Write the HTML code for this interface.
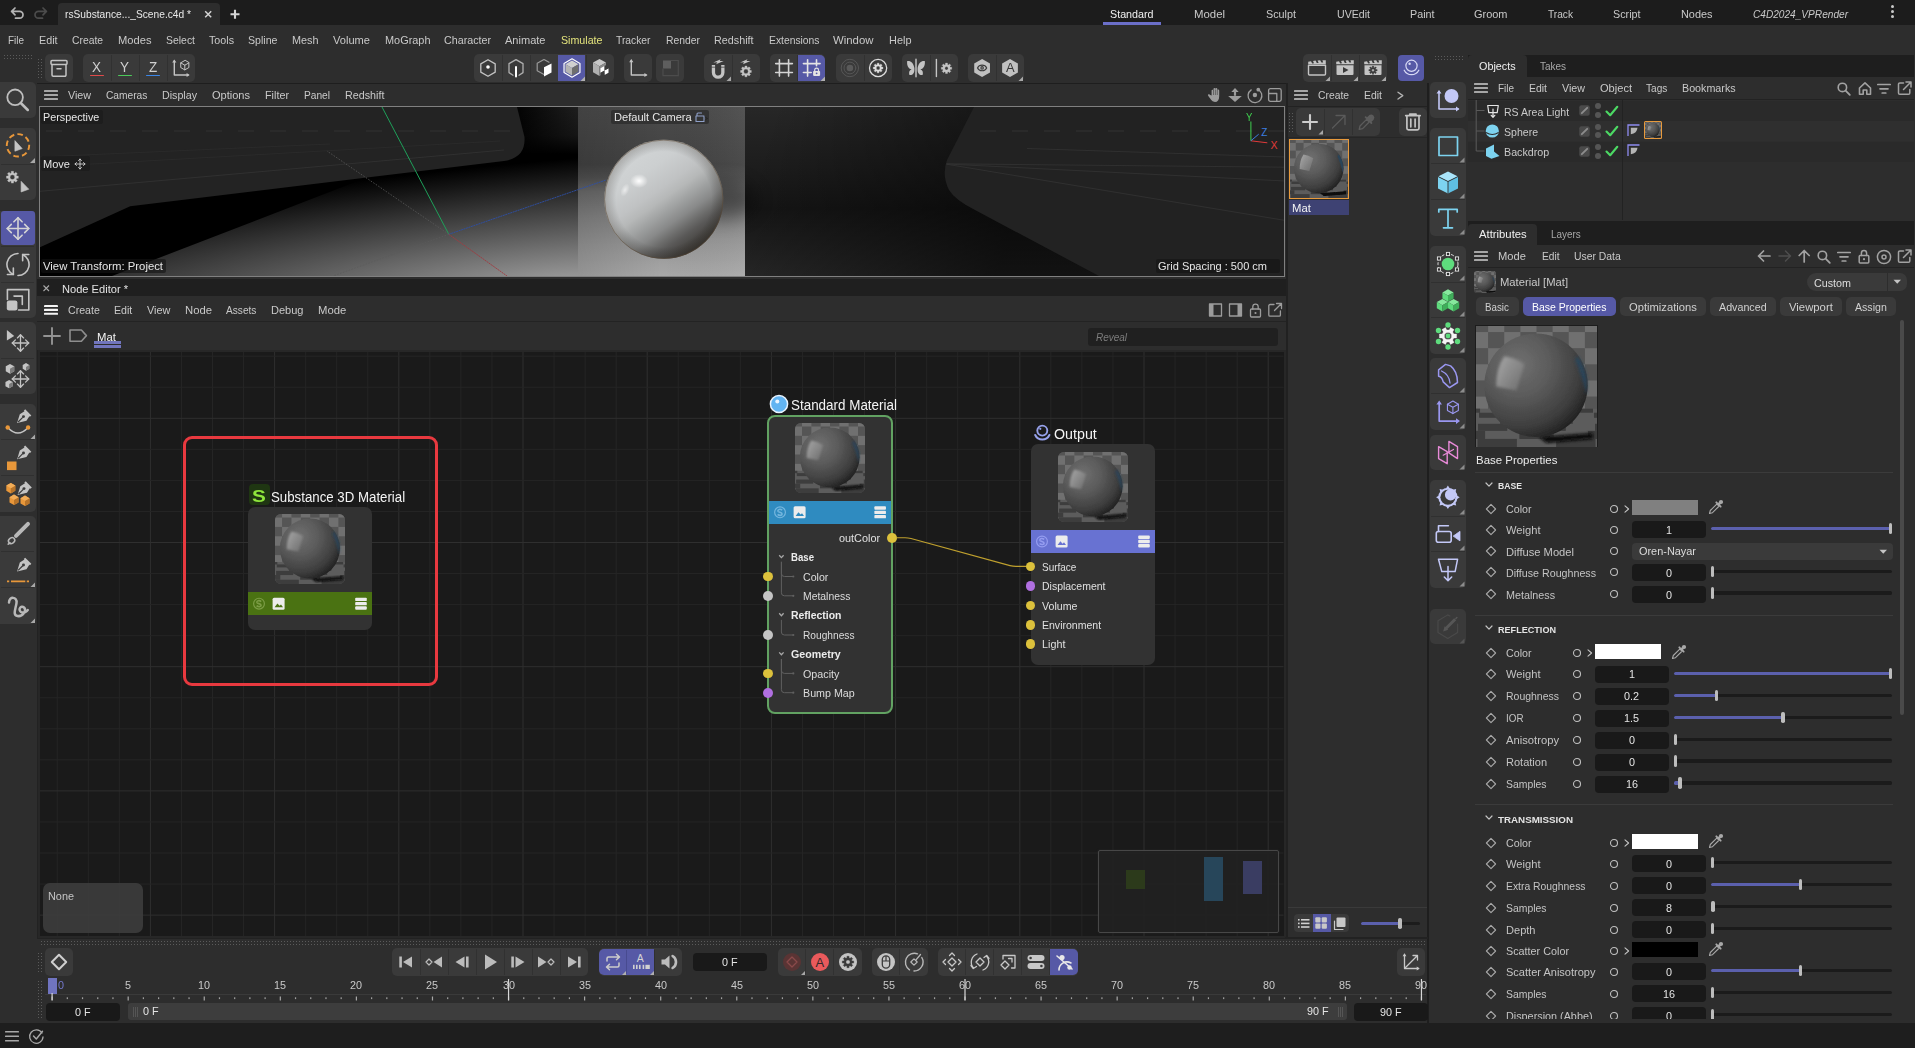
<!DOCTYPE html>
<html><head><meta charset="utf-8"><title>Cinema 4D - Node Editor</title>
<style>
html,body{margin:0;padding:0;background:#2d2d2d;}
body{width:1915px;height:1048px;position:relative;overflow:hidden;font-family:"Liberation Sans",sans-serif;}
div,svg,span.t{position:absolute;}
span.t{white-space:nowrap;transform-origin:0 0;display:block;}
svg{overflow:visible;}
</style></head><body>
<svg width="0" height="0" style="left:0;top:0"><defs>
<radialGradient id="tsph" cx="0.33" cy="0.3" r="0.8"><stop offset="0" stop-color="#707070"/><stop offset="0.4" stop-color="#5a5a5a"/><stop offset="0.75" stop-color="#3e3e3e"/><stop offset="1" stop-color="#1a1a1a"/></radialGradient>
<linearGradient id="thl" x1="0" y1="0" x2="1" y2="0.6"><stop offset="0" stop-color="#b0b0b0" stop-opacity="0.95"/><stop offset="1" stop-color="#909090" stop-opacity="0.4"/></linearGradient>
<filter id="tbl" x="-20%" y="-20%" width="140%" height="140%"><feGaussianBlur stdDeviation="1.6"/></filter>
<filter id="tbl2" x="-20%" y="-20%" width="140%" height="140%"><feGaussianBlur stdDeviation="0.5"/></filter>
<symbol id="thumb" viewBox="0 0 120 120"><g filter="url(#tbl2)"><rect width="120" height="120" fill="#707070"/><rect x="-4" y="-10" width="16" height="16" fill="#555555"/><rect x="28" y="-10" width="16" height="16" fill="#555555"/><rect x="60" y="-10" width="16" height="16" fill="#555555"/><rect x="92" y="-10" width="16" height="16" fill="#555555"/><rect x="12" y="6" width="16" height="16" fill="#555555"/><rect x="44" y="6" width="16" height="16" fill="#555555"/><rect x="76" y="6" width="16" height="16" fill="#555555"/><rect x="108" y="6" width="16" height="16" fill="#555555"/><rect x="-4" y="22" width="16" height="16" fill="#555555"/><rect x="28" y="22" width="16" height="16" fill="#555555"/><rect x="60" y="22" width="16" height="16" fill="#555555"/><rect x="92" y="22" width="16" height="16" fill="#555555"/><rect x="12" y="38" width="16" height="16" fill="#555555"/><rect x="44" y="38" width="16" height="16" fill="#555555"/><rect x="76" y="38" width="16" height="16" fill="#555555"/><rect x="108" y="38" width="16" height="16" fill="#555555"/><rect x="-4" y="54" width="16" height="16" fill="#555555"/><rect x="28" y="54" width="16" height="16" fill="#555555"/><rect x="60" y="54" width="16" height="16" fill="#555555"/><rect x="92" y="54" width="16" height="16" fill="#555555"/><rect x="12" y="70" width="16" height="16" fill="#555555"/><rect x="44" y="70" width="16" height="16" fill="#555555"/><rect x="76" y="70" width="16" height="16" fill="#555555"/><rect x="108" y="70" width="16" height="16" fill="#555555"/><rect x="-4" y="86" width="16" height="16" fill="#555555"/><rect x="28" y="86" width="16" height="16" fill="#555555"/><rect x="60" y="86" width="16" height="16" fill="#555555"/><rect x="92" y="86" width="16" height="16" fill="#555555"/><rect x="12" y="102" width="16" height="16" fill="#555555"/><rect x="44" y="102" width="16" height="16" fill="#555555"/><rect x="76" y="102" width="16" height="16" fill="#555555"/><rect x="108" y="102" width="16" height="16" fill="#555555"/>
<rect y="82" width="120" height="38" fill="#5c5c5c"/><rect x="-10.0" y="82" width="14" height="4" fill="#3c3c3c"/><rect x="18.0" y="82" width="14" height="4" fill="#3c3c3c"/><rect x="46.0" y="82" width="14" height="4" fill="#3c3c3c"/><rect x="74.0" y="82" width="14" height="4" fill="#3c3c3c"/><rect x="102.0" y="82" width="14" height="4" fill="#3c3c3c"/><rect x="130.0" y="82" width="14" height="4" fill="#3c3c3c"/><rect x="-35.0" y="86" width="19" height="5" fill="#3c3c3c"/><rect x="3.0" y="86" width="19" height="5" fill="#3c3c3c"/><rect x="41.0" y="86" width="19" height="5" fill="#3c3c3c"/><rect x="79.0" y="86" width="19" height="5" fill="#3c3c3c"/><rect x="117.0" y="86" width="19" height="5" fill="#3c3c3c"/><rect x="-24.0" y="91" width="24" height="6" fill="#3c3c3c"/><rect x="24.0" y="91" width="24" height="6" fill="#3c3c3c"/><rect x="72.0" y="91" width="24" height="6" fill="#3c3c3c"/><rect x="120.0" y="91" width="24" height="6" fill="#3c3c3c"/><rect x="-56.0" y="97" width="29" height="7" fill="#3c3c3c"/><rect x="2.0" y="97" width="29" height="7" fill="#3c3c3c"/><rect x="60.0" y="97" width="29" height="7" fill="#3c3c3c"/><rect x="118.0" y="97" width="29" height="7" fill="#3c3c3c"/><rect x="-25.0" y="104" width="34" height="8" fill="#3c3c3c"/><rect x="43.0" y="104" width="34" height="8" fill="#3c3c3c"/><rect x="111.0" y="104" width="34" height="8" fill="#3c3c3c"/><rect x="-76.5" y="112" width="39" height="9" fill="#3c3c3c"/><rect x="1.5" y="112" width="39" height="9" fill="#3c3c3c"/><rect x="79.5" y="112" width="39" height="9" fill="#3c3c3c"/><rect x="157.5" y="112" width="39" height="9" fill="#3c3c3c"/>
<path d="M62 110 L116 106 V112 L70 116Z" fill="#080808" filter="url(#tbl)"/>
<circle cx="59.5" cy="58.8" r="51.3" fill="url(#tsph)"/>
<path d="M101 30 A51.3 51.3 0 0 1 109.5 68 Q105.5 50 98 33Z" fill="#2c4459" filter="url(#tbl)"/>
<path d="M28 30 Q38 31 48 38 Q44 52 40 64 Q30 62 20 60 Q20 42 28 30Z" fill="url(#thl)" filter="url(#tbl)"/></g>
</symbol></defs></svg>
<div style="left:0px;top:0px;width:1915px;height:25px;background:#1c1c1c;"></div>
<div style="left:58px;top:3px;width:162px;height:22px;background:#2d2d2d;border-radius:4px 4px 0 0;"></div>
<svg style="left:9px;top:6.3px;" width="18" height="16" viewBox="0 0 18 16"><path d="M6 2 L2.6 5.4 L6 8.8 M2.6 5.4 H10.6 a3.4 3.4 0 0 1 0 6.8 H6.5" fill="none" stroke="#b4b4b4" stroke-width="1.7" stroke-linecap="round" stroke-linejoin="round"/></svg>
<svg style="left:32.6px;top:6.3px;" width="18" height="16" viewBox="0 0 18 16"><path d="M10 2 L13.4 5.4 L10 8.8 M13.4 5.4 H5.4 a3.4 3.4 0 0 0 0 6.8 H9.5" fill="none" stroke="#4c4c4c" stroke-width="1.7" stroke-linecap="round" stroke-linejoin="round"/></svg>
<span class="t" style="left:65.00px;top:7px;font-size:11.0px;line-height:14.88px;color:#e8e8e8;transform:scaleX(0.9282);">rsSubstance..._Scene.c4d *</span>
<svg style="left:204px;top:9.8px;" width="9" height="9" viewBox="0 0 9 9"><path d="M1.2 1.2 L7.2 7.2 M7.2 1.2 L1.2 7.2" stroke="#d4d4d4" stroke-width="1.5" fill="none"/></svg>
<svg style="left:230px;top:8.6px;" width="11" height="11" viewBox="0 0 11 11"><path d="M5 0.8 V9.8 M0.5 5.3 H9.5" stroke="#d4d4d4" stroke-width="2.1" fill="none"/></svg>
<span class="t" style="left:1109.50px;top:7px;font-size:11.0px;line-height:14.88px;color:#f0f0f0;transform:scaleX(0.9744);">Standard</span>
<span class="t" style="left:1194.00px;top:7px;font-size:11.0px;line-height:14.88px;color:#c9c9c9;transform:scaleX(1.0348);">Model</span>
<span class="t" style="left:1266.00px;top:7px;font-size:11.0px;line-height:14.88px;color:#c9c9c9;transform:scaleX(0.9813);">Sculpt</span>
<span class="t" style="left:1337.00px;top:7px;font-size:11.0px;line-height:14.88px;color:#c9c9c9;transform:scaleX(0.9639);">UVEdit</span>
<span class="t" style="left:1410.00px;top:7px;font-size:11.0px;line-height:14.88px;color:#c9c9c9;transform:scaleX(0.9772);">Paint</span>
<span class="t" style="left:1474.00px;top:7px;font-size:11.0px;line-height:14.88px;color:#c9c9c9;transform:scaleX(0.9966);">Groom</span>
<span class="t" style="left:1548.00px;top:7px;font-size:11.0px;line-height:14.88px;color:#c9c9c9;transform:scaleX(0.9228);">Track</span>
<span class="t" style="left:1613.00px;top:7px;font-size:11.0px;line-height:14.88px;color:#c9c9c9;transform:scaleX(0.9781);">Script</span>
<span class="t" style="left:1681.00px;top:7px;font-size:11.0px;line-height:14.88px;color:#c9c9c9;transform:scaleX(0.9907);">Nodes</span>
<span class="t" style="left:1753.00px;top:7px;font-size:11.0px;line-height:14.88px;color:#c9c9c9;transform:scaleX(0.9193);font-style:italic;">C4D2024_VPRender</span>
<div style="left:1103px;top:22px;width:58px;height:2.5px;background:#6b6fc9;"></div>
<div style="left:1890.5px;top:5px;width:3px;height:3px;background:#c9c9c9;border-radius:1.5px;"></div>
<div style="left:1890.5px;top:10px;width:3px;height:3px;background:#c9c9c9;border-radius:1.5px;"></div>
<div style="left:1890.5px;top:15px;width:3px;height:3px;background:#c9c9c9;border-radius:1.5px;"></div>
<span class="t" style="left:8.00px;top:33px;font-size:11.0px;line-height:14.88px;color:#c9c9c9;transform:scaleX(0.9027);">File</span>
<span class="t" style="left:39.00px;top:33px;font-size:11.0px;line-height:14.88px;color:#c9c9c9;transform:scaleX(0.9760);">Edit</span>
<span class="t" style="left:72.00px;top:33px;font-size:11.0px;line-height:14.88px;color:#c9c9c9;transform:scaleX(0.9390);">Create</span>
<span class="t" style="left:118.00px;top:33px;font-size:11.0px;line-height:14.88px;color:#c9c9c9;transform:scaleX(1.0147);">Modes</span>
<span class="t" style="left:166.00px;top:33px;font-size:11.0px;line-height:14.88px;color:#c9c9c9;transform:scaleX(0.9486);">Select</span>
<span class="t" style="left:209.00px;top:33px;font-size:11.0px;line-height:14.88px;color:#c9c9c9;transform:scaleX(0.9736);">Tools</span>
<span class="t" style="left:248.00px;top:33px;font-size:11.0px;line-height:14.88px;color:#c9c9c9;transform:scaleX(0.9648);">Spline</span>
<span class="t" style="left:292.00px;top:33px;font-size:11.0px;line-height:14.88px;color:#c9c9c9;transform:scaleX(0.9853);">Mesh</span>
<span class="t" style="left:333.00px;top:33px;font-size:11.0px;line-height:14.88px;color:#c9c9c9;transform:scaleX(1.0085);">Volume</span>
<span class="t" style="left:384.50px;top:33px;font-size:11.0px;line-height:14.88px;color:#c9c9c9;transform:scaleX(0.9924);">MoGraph</span>
<span class="t" style="left:444.00px;top:33px;font-size:11.0px;line-height:14.88px;color:#c9c9c9;transform:scaleX(0.9732);">Character</span>
<span class="t" style="left:505.00px;top:33px;font-size:11.0px;line-height:14.88px;color:#c9c9c9;transform:scaleX(1.0037);">Animate</span>
<span class="t" style="left:560.50px;top:33px;font-size:11.0px;line-height:14.88px;color:#e3e37c;transform:scaleX(0.9697);">Simulate</span>
<span class="t" style="left:616.00px;top:33px;font-size:11.0px;line-height:14.88px;color:#c9c9c9;transform:scaleX(0.9357);">Tracker</span>
<span class="t" style="left:665.50px;top:33px;font-size:11.0px;line-height:14.88px;color:#c9c9c9;transform:scaleX(0.9425);">Render</span>
<span class="t" style="left:714.00px;top:33px;font-size:11.0px;line-height:14.88px;color:#c9c9c9;transform:scaleX(0.9789);">Redshift</span>
<span class="t" style="left:768.50px;top:33px;font-size:11.0px;line-height:14.88px;color:#c9c9c9;transform:scaleX(0.9386);">Extensions</span>
<span class="t" style="left:833.00px;top:33px;font-size:11.0px;line-height:14.88px;color:#c9c9c9;transform:scaleX(1.0352);">Window</span>
<span class="t" style="left:888.50px;top:33px;font-size:11.0px;line-height:14.88px;color:#c9c9c9;transform:scaleX(0.9946);">Help</span>
<div style="left:4px;top:55px;width:30px;height:1px;background:repeating-linear-gradient(90deg,#5a5a5a 0 1px,transparent 1px 3px);"></div>
<div style="left:4px;top:58px;width:30px;height:1px;background:repeating-linear-gradient(90deg,#5a5a5a 0 1px,transparent 1px 3px);"></div>
<div style="left:38px;top:59px;width:6px;height:1px;background:repeating-linear-gradient(90deg,#5a5a5a 0 1px,transparent 1px 3px);"></div>
<div style="left:38px;top:62px;width:6px;height:1px;background:repeating-linear-gradient(90deg,#5a5a5a 0 1px,transparent 1px 3px);"></div>
<div style="left:38px;top:65px;width:6px;height:1px;background:repeating-linear-gradient(90deg,#5a5a5a 0 1px,transparent 1px 3px);"></div>
<div style="left:38px;top:68px;width:6px;height:1px;background:repeating-linear-gradient(90deg,#5a5a5a 0 1px,transparent 1px 3px);"></div>
<div style="left:38px;top:71px;width:6px;height:1px;background:repeating-linear-gradient(90deg,#5a5a5a 0 1px,transparent 1px 3px);"></div>
<div style="left:38px;top:74px;width:6px;height:1px;background:repeating-linear-gradient(90deg,#5a5a5a 0 1px,transparent 1px 3px);"></div>
<div style="left:38px;top:77px;width:6px;height:1px;background:repeating-linear-gradient(90deg,#5a5a5a 0 1px,transparent 1px 3px);"></div>
<div style="left:45px;top:54px;width:28px;height:28px;background:#3a3a3a;border-radius:5px;"></div>
<svg style="left:45px;top:54px;" width="28" height="28" viewBox="0 0 28 28"><rect x="6" y="6.5" width="16" height="4" rx="1" fill="none" stroke="#c4c4c4" stroke-width="1.5" stroke-linecap="round" stroke-linejoin="round"/><path d="M7 10.5 V21 a1.2 1.2 0 0 0 1.2 1.2 H19.8 a1.2 1.2 0 0 0 1.2 -1.2 V10.5" fill="none" stroke="#c4c4c4" stroke-width="1.5" stroke-linecap="round" stroke-linejoin="round"/><path d="M12 14.7 H16" fill="none" stroke="#c4c4c4" stroke-width="1.5" stroke-linecap="round" stroke-linejoin="round"/></svg>
<div style="left:83px;top:54px;width:112px;height:28px;background:#3a3a3a;border-radius:5px;"></div>
<div style="left:110.5px;top:55px;width:1px;height:26px;background:#313131;"></div>
<div style="left:138.5px;top:55px;width:1px;height:26px;background:#313131;"></div>
<div style="left:166.5px;top:55px;width:1px;height:26px;background:#313131;"></div>
<span class="t" style="left:92.20px;top:57px;font-size:14.5px;line-height:20.45px;color:#d0d0d0;transform:scaleX(0.9300);">X</span>
<div style="left:89.7px;top:74.7px;width:14.6px;height:1.7px;background:#e04a4a;border-radius:1px;"></div>
<span class="t" style="left:120.20px;top:57px;font-size:14.5px;line-height:20.45px;color:#d0d0d0;transform:scaleX(0.9300);">Y</span>
<div style="left:117.7px;top:74.7px;width:14.6px;height:1.7px;background:#4cc95a;border-radius:1px;"></div>
<span class="t" style="left:148.58px;top:57px;font-size:14.5px;line-height:20.45px;color:#d0d0d0;transform:scaleX(0.9300);">Z</span>
<div style="left:145.7px;top:74.7px;width:14.6px;height:1.7px;background:#3b86e8;border-radius:1px;"></div>
<svg style="left:167px;top:54px;" width="28" height="28" viewBox="0 0 28 28"><path d="M7.3 7 V21 H21" fill="none" stroke="#c4c4c4" stroke-width="1.4" stroke-linecap="round" stroke-linejoin="round"/><path d="M5.2 8.6 L7.3 5.5 L9.4 8.6Z M19.6 18.9 L22.7 21 L19.6 23.1Z" fill="#c4c4c4"/><path d="M17.80 6.50 L13.73 8.85 L13.73 13.55 L17.80 15.90 L21.87 13.55 L21.87 8.85Z" fill="none" stroke="#c4c4c4" stroke-width="1" stroke-linecap="round" stroke-linejoin="round"/><path d="M13.8 8.9 L17.8 11.2 L21.8 8.9 M17.8 11.2 V15.8" fill="none" stroke="#c4c4c4" stroke-width="1" stroke-linecap="round" stroke-linejoin="round"/></svg>
<div style="left:474px;top:54px;width:140px;height:28px;background:#3a3a3a;border-radius:5px;"></div>
<div style="left:501.5px;top:55px;width:1px;height:26px;background:#313131;"></div>
<div style="left:529.5px;top:55px;width:1px;height:26px;background:#313131;"></div>
<div style="left:557.5px;top:55px;width:1px;height:26px;background:#313131;"></div>
<div style="left:585.5px;top:55px;width:1px;height:26px;background:#313131;"></div>
<div style="left:558px;top:55px;width:27px;height:26px;background:#5659a6;border-radius:0;"></div>
<svg style="left:474px;top:54px;" width="28" height="28" viewBox="0 0 28 28"><path d="M14.00 5.70 L6.81 9.85 L6.81 18.15 L14.00 22.30 L21.19 18.15 L21.19 9.85Z" fill="none" stroke="#c4c4c4" stroke-width="1.3" stroke-linecap="round" stroke-linejoin="round"/><circle cx="14" cy="13" r="1.8" fill="#fff"/></svg>
<svg style="left:502px;top:54px;" width="28" height="28" viewBox="0 0 28 28"><path d="M11 21.2 L7 18.6 V9.6 L14 5.6 L21 9.6 V18.6 L17 21.2" fill="none" stroke="#b0b0b0" stroke-width="1.3" stroke-linecap="round" stroke-linejoin="round"/><path d="M14 13 V22.5" stroke="#fff" stroke-width="2" stroke-linecap="round"/></svg>
<svg style="left:530px;top:54px;" width="28" height="28" viewBox="0 0 28 28"><path d="M14 20.5 L7.2 16.8 V9.2 L14 5.5 L19 8.2" fill="none" stroke="#9a9a9a" stroke-width="1.2" stroke-linecap="round" stroke-linejoin="round"/><path d="M14 13.2 L21.5 9.4 V18.6 L14 22.4Z" fill="#fff"/></svg>
<svg style="left:558px;top:54px;" width="28" height="28" viewBox="0 0 28 28"><path d="M14.00 4.80 L6.03 9.40 L6.03 18.60 L14.00 23.20 L21.97 18.60 L21.97 9.40Z" fill="none" stroke="#fff" stroke-width="1.2" stroke-linecap="round" stroke-linejoin="round"/><path d="M14 6.5 L20.5 10.2 L14 14 L7.5 10.2Z" fill="#d0d0d0"/><path d="M7.5 10.2 L14 14 V21.5 L7.5 17.8Z" fill="#b4b4b4"/><path d="M20.5 10.2 L14 14 V21.5 L20.5 17.8Z" fill="#6e6e6e"/><path d="M27 22.5 L27 27 L22.5 27Z" fill="#b0b0b0"/></svg>
<svg style="left:586px;top:54px;" width="28" height="28" viewBox="0 0 28 28"><path d="M13.5 5 L20 8.6 L13.5 12.3 L7 8.6Z" fill="#c8c8c8"/><path d="M7 8.6 L13.5 12.3 V22 L7 18.3Z" fill="#b0b0b0"/><path d="M20 8.6 L13.5 12.3 V22 L20 18.3Z" fill="#8a8a8a"/><path d="M14.5 14.2 L18.5 12 V16.5 L14.5 18.7Z M18.5 16.5 L22.5 14.3 V18.8 L18.5 21Z" fill="#fff"/><path d="M18.5 12 L22.5 9.8 V14.3 L18.5 16.5Z M14.5 18.7 L18.5 16.5 V21 L14.5 23.2Z" fill="#3a3a3a"/></svg>
<div style="left:624px;top:54px;width:28px;height:28px;background:#3a3a3a;border-radius:5px;"></div>
<svg style="left:624px;top:54px;" width="28" height="28" viewBox="0 0 28 28"><path d="M7.3 6.5 V21 H22" fill="none" stroke="#c4c4c4" stroke-width="1.4" stroke-linecap="round" stroke-linejoin="round"/><path d="M5.2 8.3 L7.3 5 L9.4 8.3Z M20.4 18.9 L23.6 21 L20.4 23.1Z" fill="#c4c4c4"/></svg>
<div style="left:656px;top:54px;width:28px;height:28px;background:#3a3a3a;border-radius:5px;"></div>
<svg style="left:656px;top:54px;" width="28" height="28" viewBox="0 0 28 28"><rect x="7" y="6.5" width="8" height="8" fill="#5e5e5e"/><path d="M15 6.5 H22.3 V21.7 H7 V14.5" fill="none" stroke="#4c4c4c" stroke-width="1.2"/></svg>
<div style="left:704px;top:54px;width:56px;height:28px;background:#3a3a3a;border-radius:5px;"></div>
<div style="left:731.5px;top:55px;width:1px;height:26px;background:#313131;"></div>
<svg style="left:704px;top:54px;" width="28" height="28" viewBox="0 0 28 28"><path d="M9.45 11.1 V18.5 a4.7 4.7 0 0 0 9.4 0 V11.1" fill="none" stroke="#c4c4c4" stroke-width="3.3"/><path d="M7.5 13.2 H11.4 M16.9 13.2 H20.8" stroke="#3a3a3a" stroke-width="0.7"/><path d="M9.3 8.5 L16.7 5.2 L15.7 7.0 L19.7 6.9 L12.1 10.2 L13.3 8.2Z" fill="#c4c4c4"/><path d="M27 22.5 L27 27 L22.5 27Z" fill="#a8a8a8"/></svg>
<svg style="left:732px;top:54px;" width="28" height="28" viewBox="0 0 28 28"><path d="M17.91 16.35 L19.35 16.38 L19.35 18.42 L17.91 18.45 L17.50 19.46 L18.49 20.50 L17.05 21.94 L16.01 20.95 L15.00 21.36 L14.97 22.80 L12.93 22.80 L12.90 21.36 L11.89 20.95 L10.85 21.94 L9.41 20.50 L10.40 19.46 L9.99 18.45 L8.55 18.42 L8.55 16.38 L9.99 16.35 L10.40 15.34 L9.41 14.30 L10.85 12.86 L11.89 13.85 L12.90 13.44 L12.93 12.00 L14.97 12.00 L15.00 13.44 L16.01 13.85 L17.05 12.86 L18.49 14.30 L17.50 15.34Z M11.65 17.40 a2.3 2.3 0 1 0 4.6 0 a2.3 2.3 0 1 0 -4.6 0Z" fill="#c4c4c4" fill-rule="evenodd" stroke="#c4c4c4" stroke-width="0.35" stroke-linejoin="round"/><path transform="translate(-1.2 0)" d="M9.3 8.5 L16.7 5.2 L15.7 7.0 L19.7 6.9 L12.1 10.2 L13.3 8.2Z" fill="#c4c4c4"/></svg>
<div style="left:770px;top:54px;width:55.2px;height:28px;background:#3a3a3a;border-radius:5px;"></div>
<div style="left:797.1px;top:55px;width:1px;height:26px;background:#313131;"></div>
<div style="left:797.6px;top:55px;width:27.6px;height:26px;background:#5659a6;border-radius:0 5px 5px 0;"></div>
<svg style="left:770px;top:54px;" width="28" height="28" viewBox="0 0 28 28"><path d="M9.4 5.7 V22.1 M18.6 5.7 V22.1 M5.7 9.6 H22.4 M5.7 18.5 H22.4" fill="none" stroke="#d4d4d4" stroke-width="1.6" stroke-linecap="round" stroke-linejoin="round"/></svg>
<svg style="left:798px;top:54px;" width="28" height="28" viewBox="0 0 28 28"><path d="M9.6 5.7 V22.1 M18.5 5.7 V11.7 M5.4 9.6 H22.1 M5.4 18.5 H13.2" fill="none" stroke="#e4e4e4" stroke-width="1.6" stroke-linecap="round" stroke-linejoin="round"/><rect x="15.1" y="16.9" width="7" height="5" rx="0.8" fill="#e4e4e4"/><path d="M16.7 16.9 V16 a1.9 1.9 0 0 1 3.8 0 V16.9" fill="none" stroke="#e4e4e4" stroke-width="1.2" stroke-linecap="round" stroke-linejoin="round"/><circle cx="18.6" cy="19.3" r="0.9" fill="#5659a6"/><path d="M27 22.5 L27 27 L22.5 27Z" fill="#b0b0b0"/></svg>
<div style="left:836px;top:54px;width:56px;height:28px;background:#3a3a3a;border-radius:5px;"></div>
<div style="left:863.5px;top:55px;width:1px;height:26px;background:#313131;"></div>
<svg style="left:836px;top:54px;" width="28" height="28" viewBox="0 0 28 28"><circle cx="13.9" cy="14" r="8.7" fill="none" stroke="#565656" stroke-width="1" stroke-linecap="round" stroke-linejoin="round"/><circle cx="13.9" cy="14" r="5.9" fill="none" stroke="#565656" stroke-width="1" stroke-linecap="round" stroke-linejoin="round"/><circle cx="13.9" cy="14" r="3.3" fill="#5a5a5a"/></svg>
<svg style="left:864px;top:54px;" width="28" height="28" viewBox="0 0 28 28"><circle cx="14.1" cy="14" r="8.6" fill="none" stroke="#dcdcdc" stroke-width="1.3" stroke-linecap="round" stroke-linejoin="round"/><path d="M17.58 13.08 L18.91 13.09 L18.91 14.91 L17.58 14.92 L17.21 15.81 L18.15 16.76 L16.86 18.05 L15.91 17.11 L15.02 17.48 L15.01 18.81 L13.19 18.81 L13.18 17.48 L12.29 17.11 L11.34 18.05 L10.05 16.76 L10.99 15.81 L10.62 14.92 L9.29 14.91 L9.29 13.09 L10.62 13.08 L10.99 12.19 L10.05 11.24 L11.34 9.95 L12.29 10.89 L13.18 10.52 L13.19 9.19 L15.01 9.19 L15.02 10.52 L15.91 10.89 L16.86 9.95 L18.15 11.24 L17.21 12.19Z M12.20 14.00 a1.9 1.9 0 1 0 3.8 0 a1.9 1.9 0 1 0 -3.8 0Z" fill="#dcdcdc" fill-rule="evenodd" stroke="#dcdcdc" stroke-width="0.35" stroke-linejoin="round"/></svg>
<div style="left:902px;top:54px;width:56px;height:28px;background:#3a3a3a;border-radius:5px;"></div>
<div style="left:929.5px;top:55px;width:1px;height:26px;background:#313131;"></div>
<svg style="left:902px;top:54px;" width="28" height="28" viewBox="0 0 28 28"><path d="M14 5.4 V22.6" fill="none" stroke="#a4a4a4" stroke-width="1.9" stroke-linecap="round" stroke-linejoin="round"/><path d="M12.4 14 C11.6 8.6 8.4 6.4 5.2 7 C4.6 11 6.2 14.6 9.6 15.6 C7.2 16.4 6.6 18.6 7.4 21 C10.6 21.6 12.4 19 12.4 16Z" fill="#c4c4c4"/><path d="M15.6 14 C16.4 8.6 19.6 6.4 22.8 7 C23.4 11 21.8 14.6 18.4 15.6 C20.8 16.4 21.4 18.6 20.6 21 C17.4 21.6 15.6 19 15.6 16Z" fill="#c4c4c4"/></svg>
<svg style="left:930px;top:54px;" width="28" height="28" viewBox="0 0 28 28"><path d="M6.4 5.5 V22.5" fill="none" stroke="#c4c4c4" stroke-width="1.4" stroke-linecap="round" stroke-linejoin="round"/><path d="M20.27 13.30 L21.71 13.32 L21.71 15.28 L20.27 15.30 L19.87 16.26 L20.88 17.29 L19.49 18.68 L18.46 17.67 L17.50 18.07 L17.48 19.51 L15.52 19.51 L15.50 18.07 L14.54 17.67 L13.51 18.68 L12.12 17.29 L13.13 16.26 L12.73 15.30 L11.29 15.28 L11.29 13.32 L12.73 13.30 L13.13 12.34 L12.12 11.31 L13.51 9.92 L14.54 10.93 L15.50 10.53 L15.52 9.09 L17.48 9.09 L17.50 10.53 L18.46 10.93 L19.49 9.92 L20.88 11.31 L19.87 12.34Z M14.80 14.30 a1.7 1.7 0 1 0 3.4 0 a1.7 1.7 0 1 0 -3.4 0Z" fill="#c4c4c4" fill-rule="evenodd" stroke="#c4c4c4" stroke-width="0.35" stroke-linejoin="round"/></svg>
<div style="left:968px;top:54px;width:56px;height:28px;background:#3a3a3a;border-radius:5px;"></div>
<div style="left:995.5px;top:55px;width:1px;height:26px;background:#313131;"></div>
<svg style="left:968px;top:54px;" width="28" height="28" viewBox="0 0 28 28"><path d="M14.10 4.90 L6.22 9.45 L6.22 18.55 L14.10 23.10 L21.98 18.55 L21.98 9.45Z" fill="#c0c0c0"/><path d="M9.5 13.9 C11.2 10.2 17 10.2 18.7 13.9 C17 17.6 11.2 17.6 9.5 13.9Z" fill="none" stroke="#3a3a3a" stroke-width="1.1"/><circle cx="14.1" cy="13.9" r="1.8" fill="#3a3a3a"/><circle cx="14.1" cy="13.9" r="0.6" fill="#c0c0c0"/></svg>
<svg style="left:996px;top:54px;" width="28" height="28" viewBox="0 0 28 28"><path d="M14.00 4.90 L6.12 9.45 L6.12 18.55 L14.00 23.10 L21.88 18.55 L21.88 9.45Z" fill="#c0c0c0"/><path d="M27 22.5 L27 27 L22.5 27Z" fill="#a8a8a8"/></svg>
<span class="t" style="left:1005.68px;top:60px;font-size:12.7px;line-height:17.70px;color:#363636;transform:scaleX(1.0200);">A</span>
<div style="left:1303px;top:54px;width:84px;height:28px;background:#3a3a3a;border-radius:5px;"></div>
<div style="left:1330.5px;top:55px;width:1px;height:26px;background:#313131;"></div>
<div style="left:1358.5px;top:55px;width:1px;height:26px;background:#313131;"></div>
<svg style="left:1303px;top:54px;" width="28" height="28" viewBox="0 0 28 28"><path d="M5.5 11.3 H22.5 V20 a1 1 0 0 1 -1 1 H6.5 a1 1 0 0 1 -1 -1Z" fill="none" stroke="#c4c4c4" stroke-width="1.4" stroke-linecap="round" stroke-linejoin="round"/><path d="M5.2 10.2 V7.8 L8 7.3 L9.2 9.4 L11 9.3 L10 7 L12.6 6.6 L13.8 9 L15.6 8.9 L14.6 6.4 L17.2 6.2 L18.4 8.6 L20.2 8.5 L19.4 6.2 L22.8 6.2 V10.2Z" fill="#c4c4c4"/><path d="M27 22.5 L27 27 L22.5 27Z" fill="#a8a8a8"/></svg>
<svg style="left:1331px;top:54px;" width="28" height="28" viewBox="0 0 28 28"><path d="M5.5 11.3 H22.5 V20 a1 1 0 0 1 -1 1 H6.5 a1 1 0 0 1 -1 -1Z" fill="#c4c4c4"/><path d="M5.2 10.2 V7.8 L8 7.3 L9.2 9.4 L11 9.3 L10 7 L12.6 6.6 L13.8 9 L15.6 8.9 L14.6 6.4 L17.2 6.2 L18.4 8.6 L20.2 8.5 L19.4 6.2 L22.8 6.2 V10.2Z" fill="#c4c4c4"/><path d="M12 13 L17.5 16 L12 19Z" fill="#3a3a3a"/><path d="M27 22.5 L27 27 L22.5 27Z" fill="#a8a8a8"/></svg>
<svg style="left:1359px;top:54px;" width="28" height="28" viewBox="0 0 28 28"><path d="M5.5 11.3 H22.5 V20 a1 1 0 0 1 -1 1 H6.5 a1 1 0 0 1 -1 -1Z" fill="#c4c4c4"/><path d="M5.2 10.2 V7.8 L8 7.3 L9.2 9.4 L11 9.3 L10 7 L12.6 6.6 L13.8 9 L15.6 8.9 L14.6 6.4 L17.2 6.2 L18.4 8.6 L20.2 8.5 L19.4 6.2 L22.8 6.2 V10.2Z" fill="#c4c4c4"/><path d="M16.81 15.50 L18.14 15.47 L18.14 16.93 L16.81 16.90 L16.48 17.70 L17.44 18.61 L16.41 19.64 L15.50 18.68 L14.70 19.01 L14.73 20.34 L13.27 20.34 L13.30 19.01 L12.50 18.68 L11.59 19.64 L10.56 18.61 L11.52 17.70 L11.19 16.90 L9.86 16.93 L9.86 15.47 L11.19 15.50 L11.52 14.70 L10.56 13.79 L11.59 12.76 L12.50 13.72 L13.30 13.39 L13.27 12.06 L14.73 12.06 L14.70 13.39 L15.50 13.72 L16.41 12.76 L17.44 13.79 L16.48 14.70Z M12.70 16.20 a1.3 1.3 0 1 0 2.6 0 a1.3 1.3 0 1 0 -2.6 0Z" fill="#3a3a3a" fill-rule="evenodd" stroke="#3a3a3a" stroke-width="0.35" stroke-linejoin="round"/><path d="M27 22.5 L27 27 L22.5 27Z" fill="#a8a8a8"/></svg>
<div style="left:1397.8px;top:55px;width:26.5px;height:26px;background:#5659a6;border-radius:4px;"></div>
<svg style="left:1397.6px;top:54px;" width="28" height="28" viewBox="0 0 28 28"><circle cx="13.5" cy="11.8" r="5.6" fill="none" stroke="#d8daf5" stroke-width="1.2" stroke-linecap="round" stroke-linejoin="round"/><circle cx="11.6" cy="9.8" r="1.2" fill="#d8daf5"/><path d="M6.2 16.2 A8.2 8.2 0 0 0 20.8 16.2" fill="none" stroke="#d8daf5" stroke-width="1.2" stroke-linecap="round" stroke-linejoin="round"/></svg>
<div style="left:0px;top:82px;width:36px;height:35.7px;background:#3a3a3a;border-radius:0 5px 5px 0;"></div>
<svg style="left:0px;top:82px;" width="36" height="36" viewBox="0 0 36 36"><circle cx="15.1" cy="15.3" r="7.8" fill="none" stroke="#bebebe" stroke-width="1.8" stroke-linecap="round" stroke-linejoin="round"/><path d="M20.8 21 L27.8 28" fill="none" stroke="#bebebe" stroke-width="2.5" stroke-linecap="round" stroke-linejoin="round"/></svg>
<div style="left:0px;top:128.2px;width:36px;height:71.80000000000001px;background:#3a3a3a;border-radius:0 5px 5px 0;"></div>
<div style="left:1px;top:163.6px;width:33px;height:1px;background:#303030;"></div>
<svg style="left:0px;top:128.2px;" width="36" height="36" viewBox="0 0 36 36"><circle cx="18" cy="17.3" r="11.2" fill="none" stroke="#e8973a" stroke-width="1.9" stroke-dasharray="5.6 3.2" stroke-dashoffset="1"/><path d="M14.9 12.6 V23.2 L22.2 20.6Z" fill="#c4c4c4" stroke="#c4c4c4" stroke-width="0.6" stroke-linejoin="round"/><path d="M35 30 L35 35 L30 35Z" fill="#a8a8a8"/></svg>
<svg style="left:0px;top:164.1px;" width="36" height="36" viewBox="0 0 36 36"><path d="M16.65 12.07 L18.30 12.09 L18.30 14.31 L16.65 14.33 L16.20 15.41 L17.36 16.58 L15.78 18.16 L14.61 17.00 L13.53 17.45 L13.51 19.10 L11.29 19.10 L11.27 17.45 L10.19 17.00 L9.02 18.16 L7.44 16.58 L8.60 15.41 L8.15 14.33 L6.50 14.31 L6.50 12.09 L8.15 12.07 L8.60 10.99 L7.44 9.82 L9.02 8.24 L10.19 9.40 L11.27 8.95 L11.29 7.30 L13.51 7.30 L13.53 8.95 L14.61 9.40 L15.78 8.24 L17.36 9.82 L16.20 10.99Z M10.00 13.20 a2.4 2.4 0 1 0 4.8 0 a2.4 2.4 0 1 0 -4.8 0Z" fill="#c4c4c4" fill-rule="evenodd" stroke="#c4c4c4" stroke-width="0.35" stroke-linejoin="round"/><path d="M21.1 17.3 V28 L28.8 25.2Z" fill="#c4c4c4" stroke="#c4c4c4" stroke-width="0.6" stroke-linejoin="round"/></svg>
<div style="left:0px;top:211px;width:36px;height:106.5px;background:#3a3a3a;border-radius:0 5px 5px 0;"></div>
<div style="left:1px;top:246.0px;width:33px;height:1px;background:#303030;"></div>
<div style="left:1px;top:281.5px;width:33px;height:1px;background:#303030;"></div>
<div style="left:1px;top:211.0px;width:34px;height:34.0px;background:#5659a6;border-radius:3px;"></div>
<svg style="left:0px;top:211px;" width="36" height="36" viewBox="0 0 36 36"><path d="M7.199999999999999 17.5 H28.8 M18 6.699999999999999 V28.3" fill="none" stroke="#d4d4d4" stroke-width="1.6" stroke-linecap="round" stroke-linejoin="round"/><path d="M11.303999999999998 13.396 L7.199999999999999 17.5 L11.303999999999998 21.604 M24.696 13.396 L28.8 17.5 L24.696 21.604 M13.896 10.803999999999998 L18 6.699999999999999 L22.104 10.803999999999998 M13.896 24.196 L18 28.3 L22.104 24.196" fill="none" stroke="#d4d4d4" stroke-width="1.6" stroke-linecap="round" stroke-linejoin="round"/></svg>
<svg style="left:0px;top:246.5px;" width="36" height="36" viewBox="0 0 36 36"><path d="M18 6.5 A11 11 0 0 0 13.35 27.5 M18 28.5 A11 11 0 0 0 22.65 7.5" fill="none" stroke="#c4c4c4" stroke-width="1.6" stroke-linecap="round" stroke-linejoin="round"/><path d="M7.4 27.5 H13.35 V21 M28.8 7.5 H22.65 V13.7" fill="none" stroke="#c4c4c4" stroke-width="1.6" stroke-linecap="round" stroke-linejoin="round" stroke-linejoin="miter"/></svg>
<svg style="left:0px;top:282px;" width="36" height="36" viewBox="0 0 36 36"><path d="M7.4 17.5 V7.6 H28.8 V28 H18.5" fill="none" stroke="#c4c4c4" stroke-width="1.6" stroke-linecap="round" stroke-linejoin="round" stroke-linejoin="miter"/><path d="M14 14.1 H22.3 V22.5" fill="none" stroke="#c4c4c4" stroke-width="1.6" stroke-linecap="round" stroke-linejoin="round" stroke-linejoin="miter"/><rect x="6.8" y="18.4" width="10.6" height="10" rx="2.2" fill="#c4c4c4"/></svg>
<div style="left:0px;top:322px;width:36px;height:72px;background:#3a3a3a;border-radius:0 5px 5px 0;"></div>
<div style="left:1px;top:357.5px;width:33px;height:1px;background:#303030;"></div>
<svg style="left:0px;top:322px;" width="36" height="36" viewBox="0 0 36 36"><path d="M6.9 8 L14.2 14 L6.9 18.6Z" fill="#c4c4c4"/><path d="M12.3 21 H28.7 M20.5 12.8 V29.2" fill="none" stroke="#c4c4c4" stroke-width="1.3" stroke-linecap="round" stroke-linejoin="round"/><path d="M15.416 17.884 L12.3 21 L15.416 24.116 M25.584 17.884 L28.7 21 L25.584 24.116 M17.384 15.916 L20.5 12.8 L23.616 15.916 M17.384 26.084 L20.5 29.2 L23.616 26.084" fill="none" stroke="#c4c4c4" stroke-width="1.3" stroke-linecap="round" stroke-linejoin="round"/></svg>
<svg style="left:0px;top:358px;" width="36" height="36" viewBox="0 0 36 36"><path d="M12.3 21 H28.7 M20.5 12.8 V29.2" fill="none" stroke="#c4c4c4" stroke-width="1.3" stroke-linecap="round" stroke-linejoin="round"/><path d="M15.416 17.884 L12.3 21 L15.416 24.116 M25.584 17.884 L28.7 21 L25.584 24.116 M17.384 15.916 L20.5 12.8 L23.616 15.916 M17.384 26.084 L20.5 29.2 L23.616 26.084" fill="none" stroke="#c4c4c4" stroke-width="1.3" stroke-linecap="round" stroke-linejoin="round"/><path d="M10.00 5.90 L5.76 8.35 L5.76 13.25 L10.00 15.70 L14.24 13.25 L14.24 8.35Z" fill="#c4c4c4"/><path d="M10 10.8 L14.24 8.35 V13.25 L10 15.700000000000001Z" fill="#7a7a7a"/><path d="M26.00 5.10 L22.71 7.00 L22.71 10.80 L26.00 12.70 L29.29 10.80 L29.29 7.00Z" fill="#c4c4c4"/><path d="M26 8.9 L29.29 7.00 V10.80 L26 12.7Z" fill="#7a7a7a"/><path d="M9.10 21.90 L5.46 24.00 L5.46 28.20 L9.10 30.30 L12.74 28.20 L12.74 24.00Z" fill="#c4c4c4"/><path d="M9.1 26.1 L12.74 24.00 V28.20 L9.1 30.3Z" fill="#7a7a7a"/></svg>
<div style="left:0px;top:404px;width:36px;height:107.5px;background:#3a3a3a;border-radius:0 5px 5px 0;"></div>
<div style="left:1px;top:439.3333333333333px;width:33px;height:1px;background:#303030;"></div>
<div style="left:1px;top:475.1666666666667px;width:33px;height:1px;background:#303030;"></div>
<svg style="left:0px;top:404px;" width="36" height="36" viewBox="0 0 36 36"><g transform="translate(17.1,19) scale(1.23)"><path d="M0 0 L2.2 -7.2 L6.3 -9.8 L10.2 -5.9 L7.6 -1.8Z" fill="#c4c4c4"/><path d="M0.8 -0.8 L4.6 -4.6" stroke="#3a3a3a" stroke-width="1"/><circle cx="5.2" cy="-5.2" r="1.2" fill="#3a3a3a"/><path d="M6.0 -10.6 L11 -5.6" stroke="#c4c4c4" stroke-width="1.6"/></g><path d="M7.7 23.5 Q18 34.5 28.1 23.5" fill="none" stroke="#c4c4c4" stroke-width="1.5" stroke-linecap="round" stroke-linejoin="round"/><circle cx="7.7" cy="23.5" r="2.2" fill="#e8973a"/><circle cx="28.1" cy="23.5" r="2.2" fill="#e8973a"/><path d="M35 30.5 L35 35 L30.5 35Z" fill="#a8a8a8"/></svg>
<svg style="left:0px;top:440px;" width="36" height="36" viewBox="0 0 36 36"><g transform="translate(17.1,19.3) scale(1.23)"><path d="M0 0 L2.2 -7.2 L6.3 -9.8 L10.2 -5.9 L7.6 -1.8Z" fill="#c4c4c4"/><path d="M0.8 -0.8 L4.6 -4.6" stroke="#3a3a3a" stroke-width="1"/><circle cx="5.2" cy="-5.2" r="1.2" fill="#3a3a3a"/><path d="M6.0 -10.6 L11 -5.6" stroke="#c4c4c4" stroke-width="1.6"/></g><rect x="7" y="21.5" width="9.5" height="8.6" fill="#e8973a"/></svg>
<svg style="left:0px;top:476px;" width="36" height="36" viewBox="0 0 36 36"><path d="M10.80 7.00 L6.30 9.60 L6.30 14.80 L10.80 17.40 L15.30 14.80 L15.30 9.60Z" fill="#e8973a"/><path d="M10.8 12.2 L15.30 9.60 V14.80 L10.8 17.4Z" fill="#b8742a"/><path d="M10.8 6.999999999999999 L15.30 9.60 L10.8 12.2 L6.30 9.60Z" fill="#f2ad58"/><path d="M14.00 18.60 L9.50 21.20 L9.50 26.40 L14.00 29.00 L18.50 26.40 L18.50 21.20Z" fill="#e8973a"/><path d="M14 23.8 L18.50 21.20 V26.40 L14 29.0Z" fill="#b8742a"/><path d="M14 18.6 L18.50 21.20 L14 23.8 L9.50 21.20Z" fill="#f2ad58"/><path d="M25.00 19.60 L20.50 22.20 L20.50 27.40 L25.00 30.00 L29.50 27.40 L29.50 22.20Z" fill="#e8973a"/><path d="M25 24.8 L29.50 22.20 V27.40 L25 30.0Z" fill="#b8742a"/><path d="M25 19.6 L29.50 22.20 L25 24.8 L20.50 22.20Z" fill="#f2ad58"/><g transform="translate(17.6,19) scale(1.23)"><path d="M0 0 L2.2 -7.2 L6.3 -9.8 L10.2 -5.9 L7.6 -1.8Z" fill="#c4c4c4"/><path d="M0.8 -0.8 L4.6 -4.6" stroke="#3a3a3a" stroke-width="1"/><circle cx="5.2" cy="-5.2" r="1.2" fill="#3a3a3a"/><path d="M6.0 -10.6 L11 -5.6" stroke="#c4c4c4" stroke-width="1.6"/></g></svg>
<div style="left:0px;top:516px;width:36px;height:107.5px;background:#3a3a3a;border-radius:0 5px 5px 0;"></div>
<div style="left:1px;top:551.3333333333334px;width:33px;height:1px;background:#303030;"></div>
<div style="left:1px;top:587.1666666666666px;width:33px;height:1px;background:#303030;"></div>
<svg style="left:0px;top:516px;" width="36" height="36" viewBox="0 0 36 36"><path d="M16 19.8 L28 7.8" fill="none" stroke="#b8b8b8" stroke-width="4" stroke-linecap="round" stroke-linejoin="round"/><ellipse cx="11.6" cy="24.6" rx="3.3" ry="2.7" transform="rotate(-35 11.6 24.6)" fill="none" stroke="#b8b8b8" stroke-width="1.5" stroke-linecap="round" stroke-linejoin="round"/><path d="M8.2 28.2 L10 26.8" fill="none" stroke="#b8b8b8" stroke-width="1.5" stroke-linecap="round" stroke-linejoin="round"/></svg>
<svg style="left:0px;top:552px;" width="36" height="36" viewBox="0 0 36 36"><g transform="translate(17.1,19.4) scale(1.23)"><path d="M0 0 L2.2 -7.2 L6.3 -9.8 L10.2 -5.9 L7.6 -1.8Z" fill="#c4c4c4"/><path d="M0.8 -0.8 L4.6 -4.6" stroke="#3a3a3a" stroke-width="1"/><circle cx="5.2" cy="-5.2" r="1.2" fill="#3a3a3a"/><path d="M6.0 -10.6 L11 -5.6" stroke="#c4c4c4" stroke-width="1.6"/></g><path d="M7 29.3 H9.2 M11 29.3 H25.3 M26.8 29.3 H29" stroke="#e8973a" stroke-width="1.8"/><path d="M35 30.5 L35 35 L30.5 35Z" fill="#a8a8a8"/></svg>
<svg style="left:0px;top:588px;" width="36" height="36" viewBox="0 0 36 36"><path d="M9 14.5 C9 8 17.5 8.5 16.5 15 C15.5 21.5 12.5 27 17.5 28 C22.5 29 27 22.5 24 19.5 C21 17 17.5 21.5 21 24 C24 25.5 27 23.5 27.8 22" fill="none" stroke="#b8b8b8" stroke-width="2.5" stroke-linecap="round" stroke-linejoin="round"/><path d="M35 30.5 L35 35 L30.5 35Z" fill="#a8a8a8"/></svg>
<div style="left:37px;top:83px;width:1251px;height:1px;background:#1e1e1e;"></div>
<svg style="left:44px;top:90px;" width="14" height="10.0" viewBox="0 0 14 10.0"><rect x="0" y="0.0" width="14" height="2.0" rx="0.5" fill="#a6a6a6"/><rect x="0" y="4.0" width="14" height="2.0" rx="0.5" fill="#a6a6a6"/><rect x="0" y="8.0" width="14" height="2.0" rx="0.5" fill="#a6a6a6"/></svg>
<span class="t" style="left:67.90px;top:88px;font-size:11.0px;line-height:14.88px;color:#c9c9c9;transform:scaleX(0.9770);">View</span>
<span class="t" style="left:106.00px;top:88px;font-size:11.0px;line-height:14.88px;color:#c9c9c9;transform:scaleX(0.9278);">Cameras</span>
<span class="t" style="left:162.00px;top:88px;font-size:11.0px;line-height:14.88px;color:#c9c9c9;transform:scaleX(0.9704);">Display</span>
<span class="t" style="left:212.00px;top:88px;font-size:11.0px;line-height:14.88px;color:#c9c9c9;transform:scaleX(1.0025);">Options</span>
<span class="t" style="left:265.00px;top:88px;font-size:11.0px;line-height:14.88px;color:#c9c9c9;transform:scaleX(0.9819);">Filter</span>
<span class="t" style="left:304.00px;top:88px;font-size:11.0px;line-height:14.88px;color:#c9c9c9;transform:scaleX(0.9242);">Panel</span>
<span class="t" style="left:345.00px;top:88px;font-size:11.0px;line-height:14.88px;color:#c9c9c9;transform:scaleX(0.9764);">Redshift</span>
<svg style="left:1207px;top:87px;" width="16" height="16" viewBox="0 0 16 16"><path d="M4.6 8.5 V3.6 a0.95 0.95 0 0 1 1.9 0 V2 a0.95 0.95 0 0 1 1.9 0 V1.9 a0.95 0.95 0 0 1 1.9 0 V3.4 a0.95 0.95 0 0 1 1.9 0 V9 C12.2 13 10.6 15 8 15 C5.6 15 4.4 13.6 1 8.6 C0.6 7.4 2.4 6.8 3.2 8Z" fill="#9c9c9c"/><path d="M6.5 3 V8 M8.4 2.5 V8 M10.3 3 V8" stroke="#2d2d2d" stroke-width="0.5"/></svg>
<svg style="left:1228px;top:87px;" width="14" height="16" viewBox="0 0 14 16"><path d="M7 1 L10.7 5 H8.1 V8.8 H5.9 V5 H3.3Z" fill="#9c9c9c"/><path d="M0.2 9 H13.8 L7 15Z" fill="#9c9c9c"/></svg>
<svg style="left:1247px;top:87px;" width="16" height="16" viewBox="0 0 16 16"><path d="M10.6 2.3 A6.9 6.9 0 1 1 4.2 2.9" fill="none" stroke="#9c9c9c" stroke-width="1.3" stroke-linecap="round" stroke-linejoin="round"/><circle cx="11.3" cy="2.7" r="1.9" fill="#9c9c9c"/><circle cx="7.9" cy="8" r="2.2" fill="#9c9c9c"/></svg>
<svg style="left:1267px;top:87px;" width="16" height="16" viewBox="0 0 16 16"><rect x="1.6" y="1.7" width="12.6" height="12.6" rx="1.8" fill="none" stroke="#9c9c9c" stroke-width="1.3" stroke-linecap="round" stroke-linejoin="round"/><path d="M1.6 6.5 H9.8 V14.3" fill="none" stroke="#9c9c9c" stroke-width="1.3" stroke-linecap="round" stroke-linejoin="round"/></svg>
<div style="left:39px;top:106px;width:1246px;height:171px;background:#808080;"></div>
<svg style="left:0;top:0" width="1915" height="300" viewBox="0 0 1915 300"><defs>
<radialGradient id="flr" gradientUnits="userSpaceOnUse" cx="560" cy="280" r="800" gradientTransform="translate(560 280) rotate(-5) scale(1 0.15) translate(-560 -280)">
<stop offset="0" stop-color="#9a9a9a"/><stop offset="0.5" stop-color="#4c4c4c"/><stop offset="0.85" stop-color="#161616"/><stop offset="1" stop-color="#000"/></radialGradient>
<linearGradient id="bw" gradientUnits="userSpaceOnUse" x1="520" y1="0" x2="578" y2="0"><stop offset="0" stop-color="#040404"/><stop offset="1" stop-color="#1e1e1e"/></linearGradient>
<linearGradient id="bwm" gradientUnits="userSpaceOnUse" x1="0" y1="107" x2="0" y2="154"><stop offset="0" stop-color="#000" stop-opacity="0"/><stop offset="0.6" stop-color="#000" stop-opacity="0.3"/><stop offset="1" stop-color="#000" stop-opacity="1"/></linearGradient>
<linearGradient id="sf" x1="0" y1="0" x2="0" y2="1"><stop offset="0" stop-color="#4b4b4b"/><stop offset="0.34" stop-color="#424242"/><stop offset="0.42" stop-color="#505050"/><stop offset="0.5" stop-color="#6a6a6a"/><stop offset="0.65" stop-color="#828282"/><stop offset="0.82" stop-color="#969696"/><stop offset="1" stop-color="#a8a8a8"/></linearGradient>
<linearGradient id="sfx" x1="0" y1="0" x2="1" y2="0"><stop offset="0" stop-color="#000" stop-opacity="0.12"/><stop offset="0.5" stop-color="#000" stop-opacity="0"/><stop offset="1" stop-color="#fff" stop-opacity="0.05"/></linearGradient>
<linearGradient id="rtx" gradientUnits="userSpaceOnUse" x1="760" y1="150" x2="1010" y2="235"><stop offset="0" stop-color="#000" stop-opacity="0"/><stop offset="1" stop-color="#000" stop-opacity="0.55"/></linearGradient>
<linearGradient id="rt" x1="0" y1="0" x2="0" y2="1"><stop offset="0" stop-color="#272727"/><stop offset="0.35" stop-color="#1d1d1d"/><stop offset="0.6" stop-color="#151515"/><stop offset="0.8" stop-color="#1e1e1e"/><stop offset="1" stop-color="#282828"/></linearGradient>
<linearGradient id="sph" x1="0.1" y1="0" x2="0.8" y2="1"><stop offset="0" stop-color="#d6d9da"/><stop offset="0.3" stop-color="#cccfd0"/><stop offset="0.45" stop-color="#c0c2c3"/><stop offset="0.52" stop-color="#b6b8b8"/><stop offset="0.6" stop-color="#a0a2a2"/><stop offset="0.69" stop-color="#888989"/><stop offset="0.76" stop-color="#6c6c6b"/><stop offset="0.81" stop-color="#5a5958"/><stop offset="0.88" stop-color="#484643"/><stop offset="0.95" stop-color="#3a3733"/><stop offset="1" stop-color="#35312c"/></linearGradient>
<radialGradient id="sphe" cx="0.5" cy="0.5" r="0.5"><stop offset="0" stop-color="#000" stop-opacity="0"/><stop offset="0.8" stop-color="#000" stop-opacity="0"/><stop offset="1" stop-color="#1a1208" stop-opacity="0.22"/></radialGradient>
<radialGradient id="hl" cx="0.5" cy="0.5" r="0.5"><stop offset="0" stop-color="#fff" stop-opacity="1"/><stop offset="0.4" stop-color="#fff" stop-opacity="0.6"/><stop offset="1" stop-color="#fff" stop-opacity="0"/></radialGradient>
<filter id="vbl" x="-50%" y="-50%" width="200%" height="200%"><feGaussianBlur stdDeviation="9"/></filter>
<clipPath id="vc"><rect x="40" y="107" width="1244" height="169"/></clipPath>
</defs>
<g clip-path="url(#vc)">
<rect x="40" y="107" width="1244" height="169" fill="#000"/>
<rect x="505" y="107" width="73" height="60" fill="url(#bw)"/><rect x="505" y="107" width="73" height="60" fill="url(#bwm)"/>
<!-- floor left -->
<path d="M112 276 L367 177.6 L504 161 L524 156 L578 156 V276Z" fill="url(#flr)"/>
<!-- backdrop wall left -->
<path d="M39 107 H517 L524.5 137 Q526 158 504 161 L367 177.6 L130.2 206.3 L39 247.7Z" fill="#232323"/>
<path d="M39 191.4 L504 150" stroke="#343434" stroke-width="0.8" fill="none"/>
<path d="M39 167 L500 141 M39 157 L330 144" stroke="#2c2c2c" stroke-width="0.8" fill="none"/>
<path d="M46 131 H512" stroke="#323232" stroke-width="1" stroke-dasharray="16 16" fill="none"/>
<!-- right area -->
<rect x="745" y="107" width="540" height="169" fill="url(#rt)"/><rect x="745" y="107" width="540" height="169" fill="url(#rtx)"/>
<path d="M974 107 L947 160 Q941.5 175 949 190 Q955 200 975 210 L1099 276 H1285 V107Z" fill="#222222"/>
<path d="M946.5 163.8 L1285 167.2 M946.5 164 L1285 181 M946.5 164.2 L1285 220.4 M1027 148.5 L1285 157" stroke="#343434" stroke-width="0.8" fill="none"/>
<path d="M980 131 H1285" stroke="#323232" stroke-width="1" stroke-dasharray="16 16" fill="none"/>
<!-- safe frame -->
<rect x="578" y="107" width="167" height="169" fill="url(#sf)"/>
<rect x="578" y="107" width="167" height="169" fill="url(#sfx)"/>
<!-- axis lines -->
<path d="M382 107 L448.8 234.3" stroke="#1fa05a" stroke-width="1" fill="none"/>
<path d="M448.8 234.3 L606 180" stroke="#2c4fa8" stroke-width="0.9" stroke-dasharray="2 0.6" fill="none"/>
<path d="M448.8 234.3 L507 276" stroke="#a03a40" stroke-width="0.9" stroke-dasharray="2 0.6" fill="none"/>
<path d="M448.8 234.3 L327 151 M448.8 234.3 L333 276" stroke="#5a5a5a" stroke-width="0.8" stroke-dasharray="1.5 1.5" fill="none"/>
<!-- sphere -->
<ellipse cx="722" cy="200" rx="34" ry="20" fill="#000" opacity="0.38" filter="url(#vbl)"/>
<circle cx="663.8" cy="199.3" r="59.5" fill="url(#sph)"/><circle cx="663.8" cy="199.3" r="59.5" fill="url(#sphe)"/>
<circle cx="663.8" cy="199.3" r="59.2" fill="none" stroke="#5c4a36" stroke-width="0.9" opacity="0.55"/>
<ellipse cx="639" cy="181" rx="9" ry="7" fill="url(#hl)"/>
<ellipse cx="625" cy="190" rx="4" ry="7" transform="rotate(25 625 190)" fill="url(#hl)" opacity="0.6"/>
</g>
<!-- axis gizmo -->
<path d="M1250.9 140.8 V121.5" stroke="#3fcf4f" stroke-width="1" fill="none"/>
<path d="M1250.9 140.8 L1267.3 142.8" stroke="#e03a3a" stroke-width="1" fill="none"/>
<path d="M1250.9 140.8 L1258.7 134.2" stroke="#3b7fe0" stroke-width="1" fill="none"/>
</svg>
<span class="t" style="left:1245.80px;top:110px;font-size:10px;line-height:15.57px;color:#3fcf4f;transform:scaleX(0.9500);">Y</span>
<span class="t" style="left:1261.20px;top:125px;font-size:10px;line-height:15.57px;color:#3b7fe0;transform:scaleX(1.0000);">Z</span>
<span class="t" style="left:1270.60px;top:138px;font-size:10.5px;line-height:15.22px;color:#e03a3a;transform:scaleX(1.0000);">X</span>
<div style="left:40.5px;top:109.5px;width:62px;height:14.5px;background:rgba(28,28,28,0.75);border-radius:2px;"></div>
<span class="t" style="left:43.40px;top:110px;font-size:11.0px;line-height:14.88px;color:#e6e6e6;transform:scaleX(0.9797);">Perspective</span>
<div style="left:40.5px;top:156px;width:49px;height:14.5px;background:rgba(28,28,28,0.75);border-radius:2px;"></div>
<span class="t" style="left:43.40px;top:157px;font-size:11.0px;line-height:14.88px;color:#e6e6e6;transform:scaleX(1.0038);">Move</span>
<svg style="left:73.5px;top:157.5px;" width="12" height="12" viewBox="0 0 12 12"><path d="M6 1 V11 M1 6 H11" fill="none" stroke="#d0d0d0" stroke-width="0.9" stroke-linecap="round" stroke-linejoin="round"/><path d="M4.5 2.5 L6 1 L7.5 2.5 M4.5 9.5 L6 11 L7.5 9.5 M2.5 4.5 L1 6 L2.5 7.5 M9.5 4.5 L11 6 L9.5 7.5" fill="none" stroke="#d0d0d0" stroke-width="0.9" stroke-linecap="round" stroke-linejoin="round"/></svg>
<div style="left:40.5px;top:258.5px;width:125px;height:14.5px;background:rgba(20,20,20,0.6);border-radius:2px;"></div>
<span class="t" style="left:43.40px;top:259px;font-size:11.0px;line-height:14.88px;color:#e6e6e6;transform:scaleX(1.0296);">View Transform: Project</span>
<div style="left:611px;top:109.5px;width:98px;height:14.5px;background:rgba(45,45,45,0.8);border-radius:2px;"></div>
<span class="t" style="left:613.60px;top:110px;font-size:11.0px;line-height:14.88px;color:#e6e6e6;transform:scaleX(1.0087);">Default Camera</span>
<svg style="left:694.5px;top:111px;" width="13" height="12" viewBox="0 0 13 12"><path d="M1 10.5 V5 H9 V10.5Z M2 5 V3 a1 1 0 0 1 1 -1 H6.5" fill="none" stroke="#8fa0c8" stroke-width="1.1" stroke-linecap="round" stroke-linejoin="round"/><path d="M10.5 6 L12 7.5 M10.5 9 L12 7.5" fill="none" stroke="#222" stroke-width="1" stroke-linecap="round" stroke-linejoin="round"/></svg>
<div style="left:1155.5px;top:258.8px;width:124.5px;height:13.8px;background:rgba(24,24,24,0.9);border-radius:2px;"></div>
<span class="t" style="left:1157.60px;top:259px;font-size:11.0px;line-height:14.88px;color:#e6e6e6;transform:scaleX(1.0016);">Grid Spacing : 500 cm</span>
<div style="left:37px;top:278.5px;width:1251px;height:17.5px;background:#1f1f1f;"></div>
<svg style="left:43px;top:285px;" width="7" height="7" viewBox="0 0 7 7"><path d="M0.5 0.5 L6 6 M6 0.5 L0.5 6" stroke="#a8a8a8" stroke-width="1.1" fill="none"/></svg>
<span class="t" style="left:62.10px;top:282px;font-size:11.0px;line-height:14.88px;color:#e4e4e4;transform:scaleX(1.0088);">Node Editor *</span>
<svg style="left:44px;top:305px;" width="14" height="9.8" viewBox="0 0 14 9.8"><rect x="0" y="0.0" width="14" height="2.1" rx="0.5" fill="#f4f4f4"/><rect x="0" y="3.85" width="14" height="2.1" rx="0.5" fill="#f4f4f4"/><rect x="0" y="7.7" width="14" height="2.1" rx="0.5" fill="#f4f4f4"/></svg>
<span class="t" style="left:67.70px;top:303px;font-size:11.0px;line-height:14.88px;color:#c9c9c9;transform:scaleX(0.9632);">Create</span>
<span class="t" style="left:114.00px;top:303px;font-size:11.0px;line-height:14.88px;color:#c9c9c9;transform:scaleX(0.9655);">Edit</span>
<span class="t" style="left:147.00px;top:303px;font-size:11.0px;line-height:14.88px;color:#c9c9c9;transform:scaleX(0.9897);">View</span>
<span class="t" style="left:185.00px;top:303px;font-size:11.0px;line-height:14.88px;color:#c9c9c9;transform:scaleX(1.0268);">Node</span>
<span class="t" style="left:226.00px;top:303px;font-size:11.0px;line-height:14.88px;color:#c9c9c9;transform:scaleX(0.9209);">Assets</span>
<span class="t" style="left:271.00px;top:303px;font-size:11.0px;line-height:14.88px;color:#c9c9c9;transform:scaleX(1.0027);">Debug</span>
<span class="t" style="left:318.30px;top:303px;font-size:11.0px;line-height:14.88px;color:#c9c9c9;transform:scaleX(1.0286);">Mode</span>
<div style="left:37px;top:321.3px;width:1251px;height:1px;background:#232323;"></div>
<svg style="left:1208px;top:302px;" width="16" height="16" viewBox="0 0 16 16"><rect x="1.5" y="2" width="12" height="12" fill="none" stroke="#9c9c9c" stroke-width="1.3" stroke-linecap="round" stroke-linejoin="round"/><rect x="1.5" y="2" width="4" height="12" fill="#9c9c9c"/></svg>
<svg style="left:1228px;top:302px;" width="16" height="16" viewBox="0 0 16 16"><rect x="1.5" y="2" width="12" height="12" fill="none" stroke="#9c9c9c" stroke-width="1.3" stroke-linecap="round" stroke-linejoin="round"/><rect x="9.5" y="2" width="4" height="12" fill="#9c9c9c"/></svg>
<svg style="left:1248px;top:302px;" width="16" height="16" viewBox="0 0 16 16"><rect x="2.5" y="7" width="10" height="8" rx="1" fill="none" stroke="#9c9c9c" stroke-width="1.3" stroke-linecap="round" stroke-linejoin="round"/><path d="M4.8 7 V4.8 a2.7 2.7 0 0 1 5.4 0 V7" fill="none" stroke="#9c9c9c" stroke-width="1.3" stroke-linecap="round" stroke-linejoin="round"/><circle cx="7.5" cy="11" r="1.1" fill="#9c9c9c"/></svg>
<svg style="left:1267px;top:302px;" width="16" height="16" viewBox="0 0 16 16"><path d="M7 2.5 H3 a1.2 1.2 0 0 0 -1.2 1.2 V13 a1.2 1.2 0 0 0 1.2 1.2 H12.2 a1.2 1.2 0 0 0 1.2 -1.2 V9" fill="none" stroke="#9c9c9c" stroke-width="1.3" stroke-linecap="round" stroke-linejoin="round"/><path d="M9.5 1.5 H14.5 V6.5 M14.2 1.8 L7.5 8.5" fill="none" stroke="#9c9c9c" stroke-width="1.3" stroke-linecap="round" stroke-linejoin="round"/></svg>
<svg style="left:44px;top:328px;" width="16" height="16" viewBox="0 0 16 16"><path d="M8 0 V16 M0 8 H16" fill="none" stroke="#939393" stroke-width="1.9" stroke-linecap="round" stroke-linejoin="round" stroke-linecap="butt"/></svg>
<svg style="left:69px;top:329.3px;" width="19" height="14" viewBox="0 0 19 14"><path d="M1 1 H12.4 L17.4 6.6 L12.4 12.2 H1Z" fill="none" stroke="#8e8e8e" stroke-width="1.6" stroke-linecap="round" stroke-linejoin="round" stroke-linejoin="miter"/></svg>
<span class="t" style="left:97.20px;top:330px;font-size:11.0px;line-height:14.88px;color:#f4f4f4;transform:scaleX(1.0253);">Mat</span>
<div style="left:94px;top:341.2px;width:27px;height:2.4px;background:#7175bd;"></div>
<div style="left:94px;top:344.9px;width:27px;height:3px;background:#7175bd;"></div>
<div style="left:1088px;top:328px;width:190px;height:17.6px;background:#202020;border-radius:3px;"></div>
<span class="t" style="left:1096.30px;top:330px;font-size:11.0px;line-height:14.88px;color:#7c7c7c;transform:scaleX(0.9054);font-style:italic;">Reveal</span>
<div style="left:37px;top:349.5px;width:1249.5px;height:589.5px;background:#222;"></div>
<div style="left:38px;top:350px;width:1247.5px;height:588px;background:#272727;"></div>
<div style="left:40px;top:352px;width:1243.5px;height:584px;background:#1a1a1a"></div>
<svg style="left:0;top:0" width="1300" height="940" viewBox="0 0 1300 940"><rect x="56.75" y="352" width="1" height="584" fill="#252525"/><rect x="87.80" y="352" width="1" height="584" fill="#252525"/><rect x="118.85" y="352" width="1" height="584" fill="#252525"/><rect x="149.90" y="352" width="1" height="584" fill="#2f2f2f"/><rect x="180.95" y="352" width="1" height="584" fill="#252525"/><rect x="212.00" y="352" width="1" height="584" fill="#252525"/><rect x="243.05" y="352" width="1" height="584" fill="#252525"/><rect x="274.10" y="352" width="1" height="584" fill="#2f2f2f"/><rect x="305.15" y="352" width="1" height="584" fill="#252525"/><rect x="336.20" y="352" width="1" height="584" fill="#252525"/><rect x="367.25" y="352" width="1" height="584" fill="#252525"/><rect x="398.30" y="352" width="1" height="584" fill="#2f2f2f"/><rect x="429.35" y="352" width="1" height="584" fill="#252525"/><rect x="460.40" y="352" width="1" height="584" fill="#252525"/><rect x="491.45" y="352" width="1" height="584" fill="#252525"/><rect x="522.50" y="352" width="1" height="584" fill="#2f2f2f"/><rect x="553.55" y="352" width="1" height="584" fill="#252525"/><rect x="584.60" y="352" width="1" height="584" fill="#252525"/><rect x="615.65" y="352" width="1" height="584" fill="#252525"/><rect x="646.70" y="352" width="1" height="584" fill="#2f2f2f"/><rect x="677.75" y="352" width="1" height="584" fill="#252525"/><rect x="708.80" y="352" width="1" height="584" fill="#252525"/><rect x="739.85" y="352" width="1" height="584" fill="#252525"/><rect x="770.90" y="352" width="1" height="584" fill="#2f2f2f"/><rect x="801.95" y="352" width="1" height="584" fill="#252525"/><rect x="833.00" y="352" width="1" height="584" fill="#252525"/><rect x="864.05" y="352" width="1" height="584" fill="#252525"/><rect x="895.10" y="352" width="1" height="584" fill="#2f2f2f"/><rect x="926.15" y="352" width="1" height="584" fill="#252525"/><rect x="957.20" y="352" width="1" height="584" fill="#252525"/><rect x="988.25" y="352" width="1" height="584" fill="#252525"/><rect x="1019.30" y="352" width="1" height="584" fill="#2f2f2f"/><rect x="1050.35" y="352" width="1" height="584" fill="#252525"/><rect x="1081.40" y="352" width="1" height="584" fill="#252525"/><rect x="1112.45" y="352" width="1" height="584" fill="#252525"/><rect x="1143.50" y="352" width="1" height="584" fill="#2f2f2f"/><rect x="1174.55" y="352" width="1" height="584" fill="#252525"/><rect x="1205.60" y="352" width="1" height="584" fill="#252525"/><rect x="1236.65" y="352" width="1" height="584" fill="#252525"/><rect x="1267.70" y="352" width="1" height="584" fill="#2f2f2f"/><rect x="40" y="355.70" width="1243.5" height="1" fill="#252525"/><rect x="40" y="386.75" width="1243.5" height="1" fill="#252525"/><rect x="40" y="417.80" width="1243.5" height="1" fill="#2f2f2f"/><rect x="40" y="448.85" width="1243.5" height="1" fill="#252525"/><rect x="40" y="479.90" width="1243.5" height="1" fill="#252525"/><rect x="40" y="510.95" width="1243.5" height="1" fill="#252525"/><rect x="40" y="542.00" width="1243.5" height="1" fill="#2f2f2f"/><rect x="40" y="573.05" width="1243.5" height="1" fill="#252525"/><rect x="40" y="604.10" width="1243.5" height="1" fill="#252525"/><rect x="40" y="635.15" width="1243.5" height="1" fill="#252525"/><rect x="40" y="666.20" width="1243.5" height="1" fill="#2f2f2f"/><rect x="40" y="697.25" width="1243.5" height="1" fill="#252525"/><rect x="40" y="728.30" width="1243.5" height="1" fill="#252525"/><rect x="40" y="759.35" width="1243.5" height="1" fill="#252525"/><rect x="40" y="790.40" width="1243.5" height="1" fill="#2f2f2f"/><rect x="40" y="821.45" width="1243.5" height="1" fill="#252525"/><rect x="40" y="852.50" width="1243.5" height="1" fill="#252525"/><rect x="40" y="883.55" width="1243.5" height="1" fill="#252525"/><rect x="40" y="914.60" width="1243.5" height="1" fill="#2f2f2f"/></svg>
<div style="left:183.4px;top:436px;width:254.6px;height:250px;border-radius:9px;border:3px solid #e8393f;box-sizing:border-box;"></div>
<div style="left:249px;top:484.4px;width:20.5px;height:20.5px;background:#1f3612;border-radius:4px;"></div>
<span class="t" style="left:252.48px;top:486px;font-size:17px;line-height:22.72px;color:#8fe63c;transform:scaleX(1.2200);font-weight:bold;">S</span>
<span class="t" style="left:271.30px;top:488px;font-size:14.12px;line-height:18.71px;color:#f4f4f4;transform:scaleX(0.9396);">Substance 3D Material</span>
<div style="left:248px;top:506.5px;width:124px;height:123.5px;background:#323232;border-radius:7px;"></div>
<div style="left:274.8px;top:514px;width:70.4px;height:70.4px;border-radius:6px;overflow:hidden;background:#555"><svg style="left:0;top:0" width="70.4" height="70.4"><use href="#thumb" width="70.4" height="70.4"/></svg></div>
<div style="left:248px;top:591.5px;width:124px;height:23.3px;background:#4a7212;"></div>
<svg style="left:248px;top:591.5px;" width="124" height="23.3" viewBox="0 0 124 23.3"><circle cx="11" cy="11.65" r="5.4" fill="none" stroke="#7b9c45" stroke-width="1.2"/><path d="M13.2 9.55 C11.2 7.8500000000000005 8.5 8.75 8.9 10.450000000000001 C9.3 11.950000000000001 13.1 11.35 13.1 13.35 C13.1 14.850000000000001 10.3 15.25 8.6 13.65" fill="none" stroke="#7b9c45" stroke-width="1.6"/><rect x="24.6" y="5.65" width="12" height="12" rx="1.5" fill="#ececec"/><path d="M26.6 15.25 L29.4 11.450000000000001 L31.6 13.850000000000001 L33 12.450000000000001 L35 15.25Z" fill="#4a7212"/><rect x="107.2" y="5.65" width="11.6" height="3.4" rx="0.9" fill="#ececec"/><rect x="107.2" y="9.95" width="11.6" height="3.4" rx="0.9" fill="#ececec"/><rect x="107.2" y="14.25" width="11.6" height="3.4" rx="0.9" fill="#ececec"/></svg>
<svg style="left:769px;top:394px;" width="20" height="20" viewBox="0 0 20 20"><circle cx="10" cy="10" r="8.6" fill="#62b4f2" stroke="#eaf4ff" stroke-width="1.5"/><circle cx="8.3" cy="7.6" r="2" fill="#eaf4ff"/></svg>
<span class="t" style="left:791.00px;top:396px;font-size:14.12px;line-height:18.71px;color:#f4f4f4;transform:scaleX(0.9512);">Standard Material</span>
<div style="left:767.4px;top:414.7px;width:125.3px;height:299.3px;background:#323232;border-radius:8px;border:2.2px solid #62a262;box-sizing:border-box;"></div>
<div style="left:795px;top:422.8px;width:70px;height:70px;border-radius:6px;overflow:hidden;background:#555"><svg style="left:0;top:0" width="70" height="70"><use href="#thumb" width="70" height="70"/></svg></div>
<div style="left:769px;top:501px;width:122.2px;height:22.7px;background:#2f8bc0;"></div>
<svg style="left:769px;top:501px;" width="122.2" height="22.7" viewBox="0 0 122.2 22.7"><circle cx="11" cy="11.35" r="5.4" fill="none" stroke="#74b6de" stroke-width="1.2"/><path d="M13.2 9.25 C11.2 7.55 8.5 8.45 8.9 10.15 C9.3 11.65 13.1 11.049999999999999 13.1 13.049999999999999 C13.1 14.55 10.3 14.95 8.6 13.35" fill="none" stroke="#74b6de" stroke-width="1.6"/><rect x="24.6" y="5.35" width="12" height="12" rx="1.5" fill="#ececec"/><path d="M26.6 14.95 L29.4 11.15 L31.6 13.55 L33 12.15 L35 14.95Z" fill="#2f8bc0"/><rect x="105.4" y="5.35" width="11.6" height="3.4" rx="0.9" fill="#ececec"/><rect x="105.4" y="9.649999999999999" width="11.6" height="3.4" rx="0.9" fill="#ececec"/><rect x="105.4" y="13.95" width="11.6" height="3.4" rx="0.9" fill="#ececec"/></svg>
<span class="t" style="left:839.20px;top:531px;font-size:10.54px;line-height:15.20px;color:#e0e0e0;transform:scaleX(1.0317);">outColor</span>
<span class="t" style="left:790.90px;top:550px;font-size:10.54px;line-height:15.20px;color:#ececec;transform:scaleX(0.9129);font-weight:bold;">Base</span>
<span class="t" style="left:802.80px;top:570px;font-size:10.54px;line-height:15.20px;color:#dcdcdc;transform:scaleX(1.0085);">Color</span>
<span class="t" style="left:802.80px;top:589px;font-size:10.54px;line-height:15.20px;color:#dcdcdc;transform:scaleX(0.9868);">Metalness</span>
<span class="t" style="left:790.90px;top:608px;font-size:10.54px;line-height:15.20px;color:#ececec;transform:scaleX(0.9912);font-weight:bold;">Reflection</span>
<span class="t" style="left:802.80px;top:628px;font-size:10.54px;line-height:15.20px;color:#dcdcdc;transform:scaleX(0.9659);">Roughness</span>
<span class="t" style="left:790.90px;top:647px;font-size:10.54px;line-height:15.20px;color:#ececec;transform:scaleX(1.0121);font-weight:bold;">Geometry</span>
<span class="t" style="left:802.80px;top:667px;font-size:10.54px;line-height:15.20px;color:#dcdcdc;transform:scaleX(1.0187);">Opacity</span>
<span class="t" style="left:802.80px;top:686px;font-size:10.54px;line-height:15.20px;color:#dcdcdc;transform:scaleX(1.0164);">Bump Map</span>
<svg style="left:0;top:0" width="1300" height="940" viewBox="0 0 1300 940"><path d="M779.2 555.1999999999999 L781.4 557.5999999999999 L783.6 555.1999999999999" fill="none" stroke="#a8a8a8" stroke-width="1.3"/><path d="M779.2 613.3 L781.4 615.6999999999999 L783.6 613.3" fill="none" stroke="#a8a8a8" stroke-width="1.3"/><path d="M779.2 652.4 L781.4 654.8 L783.6 652.4" fill="none" stroke="#a8a8a8" stroke-width="1.3"/><path d="M781.4 561.8 V573.5 Q781.4 576.5 784.4 576.5 H793" fill="none" stroke="#606060" stroke-width="1"/><circle cx="793.3" cy="576.5" r="1.1" fill="#606060"/><path d="M781.4 561.8 V592.8 Q781.4 595.8 784.4 595.8 H793" fill="none" stroke="#606060" stroke-width="1"/><circle cx="793.3" cy="595.8" r="1.1" fill="#606060"/><path d="M781.4 619.9 V632 Q781.4 635 784.4 635 H793" fill="none" stroke="#606060" stroke-width="1"/><circle cx="793.3" cy="635" r="1.1" fill="#606060"/><path d="M781.4 659 V670.4 Q781.4 673.4 784.4 673.4 H793" fill="none" stroke="#606060" stroke-width="1"/><circle cx="793.3" cy="673.4" r="1.1" fill="#606060"/><path d="M781.4 659 V689.7 Q781.4 692.7 784.4 692.7 H793" fill="none" stroke="#606060" stroke-width="1"/><circle cx="793.3" cy="692.7" r="1.1" fill="#606060"/><path d="M897 537.7 H905 Q908 537.7 911 538.5 L1010 565.6 Q1013 566.4 1016 566.4 H1026" fill="none" stroke="#bfa02e" stroke-width="1.15"/></svg>
<div style="left:887.1px;top:532.8000000000001px;width:9.8px;height:9.8px;background:#dcc13c;border-radius:4.9px;"></div>
<div style="left:762.9px;top:571.6px;width:9.8px;height:9.8px;background:#dcc13c;border-radius:4.9px;"></div>
<div style="left:762.9px;top:590.9px;width:9.8px;height:9.8px;background:#c4c4c4;border-radius:4.9px;"></div>
<div style="left:762.9px;top:630.1px;width:9.8px;height:9.8px;background:#c4c4c4;border-radius:4.9px;"></div>
<div style="left:762.9px;top:668.5px;width:9.8px;height:9.8px;background:#dcc13c;border-radius:4.9px;"></div>
<div style="left:762.9px;top:687.8000000000001px;width:9.8px;height:9.8px;background:#b06fe0;border-radius:4.9px;"></div>
<svg style="left:1034px;top:423.6px;" width="17" height="19" viewBox="0 0 17 19"><circle cx="8.3" cy="6.6" r="5" fill="none" stroke="#96a1ea" stroke-width="1.9" stroke-linecap="round" stroke-linejoin="round"/><circle cx="6.3" cy="4.8" r="1.1" fill="#96a1ea"/><path d="M1.2 11 A7.8 7.8 0 0 0 15.4 11" fill="none" stroke="#96a1ea" stroke-width="2" stroke-linecap="round" stroke-linejoin="round"/></svg>
<span class="t" style="left:1054.00px;top:425px;font-size:14.12px;line-height:18.71px;color:#f4f4f4;transform:scaleX(1.0098);">Output</span>
<div style="left:1030.7px;top:444px;width:124px;height:220.7px;background:#323232;border-radius:7px;"></div>
<div style="left:1057.7px;top:451.8px;width:70px;height:70px;border-radius:6px;overflow:hidden;background:#555"><svg style="left:0;top:0" width="70" height="70"><use href="#thumb" width="70" height="70"/></svg></div>
<div style="left:1030.7px;top:529.7px;width:124px;height:23px;background:#6872d2;"></div>
<svg style="left:1030.7px;top:529.7px;" width="124" height="23" viewBox="0 0 124 23"><circle cx="11" cy="11.5" r="5.4" fill="none" stroke="#959df0" stroke-width="1.2"/><path d="M13.2 9.4 C11.2 7.7 8.5 8.6 8.9 10.3 C9.3 11.8 13.1 11.2 13.1 13.2 C13.1 14.7 10.3 15.1 8.6 13.5" fill="none" stroke="#959df0" stroke-width="1.6"/><rect x="24.6" y="5.5" width="12" height="12" rx="1.5" fill="#ececec"/><path d="M26.6 15.1 L29.4 11.3 L31.6 13.7 L33 12.3 L35 15.1Z" fill="#6872d2"/><rect x="107.2" y="5.5" width="11.6" height="3.4" rx="0.9" fill="#ececec"/><rect x="107.2" y="9.8" width="11.6" height="3.4" rx="0.9" fill="#ececec"/><rect x="107.2" y="14.1" width="11.6" height="3.4" rx="0.9" fill="#ececec"/></svg>
<div style="left:1025.6px;top:561.5px;width:9.8px;height:9.8px;background:#dcc13c;border-radius:4.9px;"></div>
<span class="t" style="left:1042.40px;top:560px;font-size:10.54px;line-height:15.20px;color:#e0e0e0;transform:scaleX(0.9471);">Surface</span>
<div style="left:1025.6px;top:580.9px;width:9.8px;height:9.8px;background:#b06fe0;border-radius:4.9px;"></div>
<span class="t" style="left:1042.40px;top:579px;font-size:10.54px;line-height:15.20px;color:#e0e0e0;transform:scaleX(0.9945);">Displacement</span>
<div style="left:1025.6px;top:600.6px;width:9.8px;height:9.8px;background:#dcc13c;border-radius:4.9px;"></div>
<span class="t" style="left:1042.40px;top:599px;font-size:10.54px;line-height:15.20px;color:#e0e0e0;transform:scaleX(1.0070);">Volume</span>
<div style="left:1025.6px;top:620.1px;width:9.8px;height:9.8px;background:#dcc13c;border-radius:4.9px;"></div>
<span class="t" style="left:1042.40px;top:618px;font-size:10.54px;line-height:15.20px;color:#e0e0e0;transform:scaleX(0.9989);">Environment</span>
<div style="left:1025.6px;top:639.1px;width:9.8px;height:9.8px;background:#dcc13c;border-radius:4.9px;"></div>
<span class="t" style="left:1042.40px;top:637px;font-size:10.54px;line-height:15.20px;color:#e0e0e0;transform:scaleX(1.0239);">Light</span>
<div style="left:43px;top:883.4px;width:100px;height:49.3px;background:rgba(62,62,62,0.88);border-radius:7px;"></div>
<span class="t" style="left:48.40px;top:889px;font-size:11.0px;line-height:14.88px;color:#c4c4c4;transform:scaleX(0.9888);">None</span>
<div style="left:1097.5px;top:849.5px;width:181.8px;height:83.2px;background:rgba(33,33,33,0.93);border-radius:2px;border:1.5px solid #474747;box-sizing:border-box;box-shadow:0 0 2px rgba(60,60,60,0.5);"></div>
<div style="left:1126.4px;top:870.3px;width:18.6px;height:18.6px;background:#2c3a1b;"></div>
<div style="left:1204px;top:856.7px;width:19px;height:44.7px;background:#27465a;"></div>
<div style="left:1243.3px;top:860.9px;width:18.7px;height:33.1px;background:#3a3d62;"></div>
<div style="left:1285.5px;top:83px;width:2.2px;height:856px;background:#212121;"></div>
<div style="left:1427px;top:83px;width:2px;height:940px;background:#1e1e1e;"></div>
<svg style="left:1294px;top:90px;" width="14" height="10.0" viewBox="0 0 14 10.0"><rect x="0" y="0.0" width="14" height="2.0" rx="0.5" fill="#a6a6a6"/><rect x="0" y="4.0" width="14" height="2.0" rx="0.5" fill="#a6a6a6"/><rect x="0" y="8.0" width="14" height="2.0" rx="0.5" fill="#a6a6a6"/></svg>
<span class="t" style="left:1318.00px;top:88px;font-size:11.0px;line-height:14.88px;color:#c9c9c9;transform:scaleX(0.9390);">Create</span>
<span class="t" style="left:1364.40px;top:88px;font-size:11.0px;line-height:14.88px;color:#c9c9c9;transform:scaleX(0.9496);">Edit</span>
<svg style="left:1397px;top:90px;" width="8" height="11" viewBox="0 0 8 11"><path d="M1 2.2 L5.8 5.6 L1 9" fill="none" stroke="#b4b4b4" stroke-width="1.3" stroke-linecap="round" stroke-linejoin="round"/></svg>
<div style="left:1288px;top:106.3px;width:139px;height:1px;background:#222;"></div>
<div style="left:1289px;top:113.3px;width:6px;height:1px;background:repeating-linear-gradient(90deg,#5a5a5a 0 1px,transparent 1px 3px);"></div>
<div style="left:1289px;top:116.3px;width:6px;height:1px;background:repeating-linear-gradient(90deg,#5a5a5a 0 1px,transparent 1px 3px);"></div>
<div style="left:1289px;top:119.3px;width:6px;height:1px;background:repeating-linear-gradient(90deg,#5a5a5a 0 1px,transparent 1px 3px);"></div>
<div style="left:1289px;top:122.3px;width:6px;height:1px;background:repeating-linear-gradient(90deg,#5a5a5a 0 1px,transparent 1px 3px);"></div>
<div style="left:1289px;top:125.3px;width:6px;height:1px;background:repeating-linear-gradient(90deg,#5a5a5a 0 1px,transparent 1px 3px);"></div>
<div style="left:1289px;top:128.3px;width:6px;height:1px;background:repeating-linear-gradient(90deg,#5a5a5a 0 1px,transparent 1px 3px);"></div>
<div style="left:1289px;top:131.3px;width:6px;height:1px;background:repeating-linear-gradient(90deg,#5a5a5a 0 1px,transparent 1px 3px);"></div>
<div style="left:1296px;top:108px;width:84px;height:27.5px;background:#3a3a3a;border-radius:5px;"></div>
<div style="left:1323.5px;top:109px;width:1px;height:25.5px;background:#313131;"></div>
<div style="left:1351.5px;top:109px;width:1px;height:25.5px;background:#313131;"></div>
<svg style="left:1296px;top:108px;" width="28" height="28" viewBox="0 0 28 28"><path d="M14 7 V21 M7 14 H21" fill="none" stroke="#cccccc" stroke-width="2.1" stroke-linecap="round" stroke-linejoin="round" stroke-linecap="butt"/><path d="M27 22.0 L27 26.5 L22.5 26.5Z" fill="#a8a8a8"/></svg>
<svg style="left:1324px;top:108px;" width="28" height="28" viewBox="0 0 28 28"><path d="M8.5 20 L20.5 8 M12 7.5 H21 V16.5" fill="none" stroke="#5a5a5a" stroke-width="1.3" stroke-linecap="round" stroke-linejoin="round"/></svg>
<svg style="left:1352px;top:108px;" width="28" height="28" viewBox="0 0 28 28"><path d="M7.2 21.4 L8 18 L14.6 11.4 L17.2 14 L10.6 20.6Z" fill="none" stroke="#5c5c5c" stroke-width="1.3" stroke-linecap="round" stroke-linejoin="round"/><path d="M13.6 9.2 L19.4 15 M15 10.6 L17.8 7.8 a2.3 2.3 0 0 1 3.2 3.2 L18.2 13.8Z" fill="#5c5c5c" stroke="#5c5c5c" stroke-width="1.8" stroke-linecap="round" stroke-linejoin="round"/></svg>
<div style="left:1399px;top:108px;width:28px;height:27.5px;background:#3a3a3a;border-radius:5px;"></div>
<svg style="left:1399px;top:108px;" width="28" height="28" viewBox="0 0 28 28"><path d="M6.7 7.6 H21.2 M10.8 7.2 V6 H17 V7.2" fill="none" stroke="#c4c4c4" stroke-width="1.7" stroke-linecap="round" stroke-linejoin="round"/><path d="M7.9 8 V20.2 a1.6 1.6 0 0 0 1.6 1.6 H18.4 a1.6 1.6 0 0 0 1.6 -1.6 V8" fill="none" stroke="#c4c4c4" stroke-width="1.7" stroke-linecap="round" stroke-linejoin="round"/><path d="M11.8 11.2 V18.8 M16.1 11.2 V18.8" fill="none" stroke="#c4c4c4" stroke-width="1.7" stroke-linecap="round" stroke-linejoin="round" stroke-linecap="butt"/></svg>
<div style="left:1288px;top:137px;width:139px;height:1px;background:#262626;"></div>
<div style="left:1289px;top:139px;width:60px;height:59.8px;background:#e89a3c;"></div>
<div style="left:1290px;top:140px;width:58px;height:58px;border-radius:0px;overflow:hidden;background:#555"><svg style="left:0;top:0" width="58" height="58"><use href="#thumb" width="58" height="58"/></svg></div>
<div style="left:1289px;top:199.8px;width:60px;height:15.2px;background:#3e4273;"></div>
<span class="t" style="left:1291.80px;top:201px;font-size:11.0px;line-height:14.88px;color:#f4f4f4;transform:scaleX(1.0253);">Mat</span>
<div style="left:1288px;top:907px;width:139px;height:1px;background:#3a3a3a;"></div>
<div style="left:1285px;top:936.5px;width:143px;height:2px;background:#222;"></div>
<div style="left:1294px;top:913.5px;width:54.7px;height:18.8px;background:#3a3a3a;border-radius:4px;"></div>
<div style="left:1312.5px;top:913.5px;width:18px;height:18.8px;background:#5659a6;"></div>
<svg style="left:1294px;top:913.5px;" width="55" height="19" viewBox="0 0 55 19"><rect x="4" y="5.0" width="1.6" height="1.6" fill="#d0d0d0"/><rect x="7" y="5.0" width="8.5" height="1.6" fill="#d0d0d0"/><rect x="4" y="8.6" width="1.6" height="1.6" fill="#d0d0d0"/><rect x="7" y="8.6" width="8.5" height="1.6" fill="#d0d0d0"/><rect x="4" y="12.2" width="1.6" height="1.6" fill="#d0d0d0"/><rect x="7" y="12.2" width="8.5" height="1.6" fill="#d0d0d0"/><rect x="21.3" y="3.2" width="5.2" height="5.2" rx="1" fill="#c8c8c8"/><rect x="21.3" y="9.600000000000001" width="5.2" height="5.2" rx="1" fill="#c8c8c8"/><rect x="27.700000000000003" y="3.2" width="5.2" height="5.2" rx="1" fill="#c8c8c8"/><rect x="27.700000000000003" y="9.600000000000001" width="5.2" height="5.2" rx="1" fill="#c8c8c8"/><path d="M40.5 7 V15.5 H49" fill="none" stroke="#c8c8c8" stroke-width="1.2" stroke-linecap="round" stroke-linejoin="round"/><rect x="42.5" y="3.5" width="9" height="9.5" rx="1" fill="#c8c8c8"/></svg>
<div style="left:1361px;top:921.6px;width:59px;height:3.2px;background:#1c1c1c;border-radius:1.6px;"></div>
<div style="left:1361px;top:921.6px;width:39px;height:3.2px;background:#5b60ad;border-radius:1.6px;"></div>
<div style="left:1398px;top:917.5px;width:3.6px;height:11.5px;background:#bcbcbc;border-radius:1.8px;"></div>
<div style="left:1434.5px;top:56px;width:30px;height:1px;background:repeating-linear-gradient(90deg,#5a5a5a 0 1px,transparent 1px 3px);"></div>
<div style="left:1434.5px;top:59px;width:30px;height:1px;background:repeating-linear-gradient(90deg,#5a5a5a 0 1px,transparent 1px 3px);"></div>
<div style="left:1430px;top:82.3px;width:36px;height:35.7px;background:#3a3a3a;border-radius:5px;"></div>
<svg style="left:1430px;top:82px;" width="36" height="36" viewBox="0 0 36 36"><path d="M9 9.5 V27 H28" fill="none" stroke="#c3c8f7" stroke-width="1.6" stroke-linecap="round" stroke-linejoin="round"/><path d="M6.5 11.5 L9 8 L11.5 11.5Z M26 24.5 L29.5 27 L26 29.5Z" fill="#c3c8f7"/><circle cx="21.5" cy="14" r="7" fill="#c3c8f7"/></svg>
<div style="left:1430px;top:128px;width:36px;height:107.69999999999999px;background:#3a3a3a;border-radius:5px;"></div>
<div style="left:1431px;top:163.4px;width:34px;height:1px;background:#303030;"></div>
<div style="left:1431px;top:199.3px;width:34px;height:1px;background:#303030;"></div>
<svg style="left:1430px;top:128px;" width="36" height="36" viewBox="0 0 36 36"><rect x="9" y="9" width="18.5" height="18.5" fill="none" stroke="#7dd3f0" stroke-width="1.7" stroke-linecap="round" stroke-linejoin="round" stroke-linejoin="miter"/><path d="M34.5 29.5 L34.5 34.5 L29.5 34.5Z" fill="#8c8c8c"/></svg>
<svg style="left:1430px;top:163.9px;" width="36" height="36" viewBox="0 0 36 36"><path d="M18 7.5 L28 12.5 L18 17.5 L8 12.5Z" fill="#a9e4fa"/><path d="M8 12.5 L18 17.5 V29.5 L8 24.5Z" fill="#7dd3f0"/><path d="M28 12.5 L18 17.5 V29.5 L28 24.5Z" fill="#5fbfe3"/><path d="M8 12.5 L18 17.5 L28 12.5 M18 17.5 V29.5" stroke="#2d2d2d" stroke-width="0.9" fill="none"/><path d="M34.5 29.5 L34.5 34.5 L29.5 34.5Z" fill="#8c8c8c"/></svg>
<svg style="left:1430px;top:199.8px;" width="36" height="36" viewBox="0 0 36 36"><path d="M8.8 12 V9.3 H27.2 V12 M18 9.3 V27.8 M13.5 27.8 H22.5" fill="none" stroke="#7dd3f0" stroke-width="1.7" stroke-linecap="round" stroke-linejoin="round" stroke-linecap="butt" stroke-linejoin="miter"/><path d="M34.5 29.5 L34.5 34.5 L29.5 34.5Z" fill="#8c8c8c"/></svg>
<div style="left:1430px;top:246.3px;width:36px;height:107.39999999999998px;background:#3a3a3a;border-radius:5px;"></div>
<div style="left:1431px;top:281.6px;width:34px;height:1px;background:#303030;"></div>
<div style="left:1431px;top:317.4px;width:34px;height:1px;background:#303030;"></div>
<svg style="left:1430px;top:246.3px;" width="36" height="36" viewBox="0 0 36 36"><circle cx="18" cy="18" r="10" fill="none" stroke="#e8e8e8" stroke-width="1" stroke-dasharray="3 2"/><circle cx="18" cy="18" r="6.3" fill="#5edb7d"/><rect x="16.4" y="6.4" width="3.2" height="3.2" fill="#2d2d2d" stroke="#e8e8e8" stroke-width="0.9"/><rect x="7.4" y="10.9" width="3.2" height="3.2" fill="#2d2d2d" stroke="#e8e8e8" stroke-width="0.9"/><rect x="25.4" y="10.9" width="3.2" height="3.2" fill="#2d2d2d" stroke="#e8e8e8" stroke-width="0.9"/><rect x="7.4" y="21.9" width="3.2" height="3.2" fill="#2d2d2d" stroke="#e8e8e8" stroke-width="0.9"/><rect x="25.4" y="21.9" width="3.2" height="3.2" fill="#2d2d2d" stroke="#e8e8e8" stroke-width="0.9"/><rect x="16.4" y="26.4" width="3.2" height="3.2" fill="#2d2d2d" stroke="#e8e8e8" stroke-width="0.9"/><path d="M34.5 29.5 L34.5 34.5 L29.5 34.5Z" fill="#8c8c8c"/></svg>
<svg style="left:1430px;top:282.1px;" width="36" height="36" viewBox="0 0 36 36"><path d="M18 7.3 L23.58 10.4 L18 13.5 L12.42 10.4Z" fill="#86e89d"/><path d="M12.42 10.4 L18 13.5 V19.7 L12.42 16.6Z" fill="#5edb7d"/><path d="M23.58 10.4 L18 13.5 V19.7 L23.58 16.6Z" fill="#3fae5a"/><path d="M12.4 17.0 L17.98 20.099999999999998 L12.4 23.2 L6.82 20.099999999999998Z" fill="#86e89d"/><path d="M6.82 20.099999999999998 L12.4 23.2 V29.4 L6.82 26.3Z" fill="#5edb7d"/><path d="M17.98 20.099999999999998 L12.4 23.2 V29.4 L17.98 26.3Z" fill="#3fae5a"/><path d="M23.6 17.0 L29.18 20.099999999999998 L23.6 23.2 L18.020000000000003 20.099999999999998Z" fill="#86e89d"/><path d="M18.020000000000003 20.099999999999998 L23.6 23.2 V29.4 L18.020000000000003 26.3Z" fill="#5edb7d"/><path d="M29.18 20.099999999999998 L23.6 23.2 V29.4 L29.18 26.3Z" fill="#3fae5a"/><path d="M34.5 29.5 L34.5 34.5 L29.5 34.5Z" fill="#8c8c8c"/></svg>
<svg style="left:1430px;top:317.9px;" width="36" height="36" viewBox="0 0 36 36"><path d="M23.88 16.02 L26.56 15.96 L26.56 20.04 L23.88 19.98 L22.65 22.10 L24.05 24.39 L20.52 26.43 L19.23 24.08 L16.77 24.08 L15.48 26.43 L11.95 24.39 L13.35 22.10 L12.12 19.98 L9.44 20.04 L9.44 15.96 L12.12 16.02 L13.35 13.90 L11.95 11.61 L15.48 9.57 L16.77 11.92 L19.23 11.92 L20.52 9.57 L24.05 11.61 L22.65 13.90Z M14.40 18.00 a3.6 3.6 0 1 0 7.2 0 a3.6 3.6 0 1 0 -7.2 0Z" fill="#f4f4f4" fill-rule="evenodd" stroke="#f4f4f4" stroke-width="0.35" stroke-linejoin="round"/><circle cx="18" cy="18" r="2.4" fill="#5edb7d"/><circle cx="18.0" cy="7.0" r="2.7" fill="#5edb7d"/><circle cx="27.5" cy="12.5" r="2.7" fill="#5edb7d"/><circle cx="27.5" cy="23.5" r="2.7" fill="#5edb7d"/><circle cx="18.0" cy="29.0" r="2.7" fill="#5edb7d"/><circle cx="8.5" cy="23.5" r="2.7" fill="#5edb7d"/><circle cx="8.5" cy="12.5" r="2.7" fill="#5edb7d"/><path d="M34.5 29.5 L34.5 34.5 L29.5 34.5Z" fill="#8c8c8c"/></svg>
<div style="left:1430px;top:358px;width:36px;height:71.60000000000002px;background:#3a3a3a;border-radius:5px;"></div>
<div style="left:1431px;top:393.3px;width:34px;height:1px;background:#303030;"></div>
<svg style="left:1430px;top:358px;" width="36" height="36" viewBox="0 0 36 36"><path d="M15.5 6.4 L8.6 11.9 V18.2 C11 18.5 12.6 21 13.2 23.9 L19.5 29.6 L27.5 24.5 C27.5 17 24.5 11 20.6 7.9Z" fill="none" stroke="#9a97f0" stroke-width="1.5" stroke-linecap="round" stroke-linejoin="round"/><path d="M11.5 13 C16 15 19.5 19.5 20 25" fill="none" stroke="#9a97f0" stroke-width="1.3" stroke-linecap="round" stroke-linejoin="round"/><path d="M34.5 29.5 L34.5 34.5 L29.5 34.5Z" fill="#8c8c8c"/></svg>
<svg style="left:1430px;top:393.8px;" width="36" height="36" viewBox="0 0 36 36"><path d="M9.2 8.5 V27.1 H27.5" fill="none" stroke="#9a97f0" stroke-width="1.7" stroke-linecap="round" stroke-linejoin="round"/><path d="M6.4 10.6 L9.2 6.6 L12 10.6Z M26 24.3 L30 27.1 L26 29.9Z" fill="#9a97f0"/><path d="M22.90 7.00 L17.44 10.15 L17.44 16.45 L22.90 19.60 L28.36 16.45 L28.36 10.15Z" fill="none" stroke="#9a97f0" stroke-width="1.1" stroke-linecap="round" stroke-linejoin="round"/><path d="M17.4 10.2 L22.9 13.3 L28.4 10.2 M22.9 13.3 V19.6" fill="none" stroke="#9a97f0" stroke-width="1.1" stroke-linecap="round" stroke-linejoin="round"/><path d="M34.5 29.5 L34.5 34.5 L29.5 34.5Z" fill="#8c8c8c"/></svg>
<div style="left:1430px;top:434.5px;width:36px;height:35.19999999999999px;background:#3a3a3a;border-radius:5px;"></div>
<svg style="left:1430px;top:434.5px;" width="36" height="36" viewBox="0 0 36 36"><path d="M8.6 11.6 L17.2 16.7 V28.7 L8.6 23.6Z M18.9 6.4 L27.5 11.6 V23.6 L18.9 17.9Z" fill="none" stroke="#e88ad8" stroke-width="1.4" stroke-linecap="round" stroke-linejoin="round" stroke-linejoin="miter"/><path d="M13.2 20.2 L23.5 14.4" fill="none" stroke="#e88ad8" stroke-width="1.2" stroke-linecap="round" stroke-linejoin="round"/><path d="M34.5 29.5 L34.5 34.5 L29.5 34.5Z" fill="#8c8c8c"/></svg>
<div style="left:1430px;top:480.3px;width:36px;height:107.30000000000001px;background:#3a3a3a;border-radius:5px;"></div>
<div style="left:1431px;top:515.5666666666667px;width:34px;height:1px;background:#303030;"></div>
<div style="left:1431px;top:551.3333333333334px;width:34px;height:1px;background:#303030;"></div>
<svg style="left:1430px;top:480.3px;" width="36" height="36" viewBox="0 0 36 36"><path d="M26.7 15.4 L29.7 17.3 L26.7 19.2Z" fill="#c3c8f7"/><path d="M25.4 22.2 L26.2 25.6 L22.8 24.8Z" fill="#c3c8f7"/><path d="M19.8 26.1 L17.9 29.1 L16.0 26.1Z" fill="#c3c8f7"/><path d="M13.0 24.8 L9.6 25.6 L10.4 22.2Z" fill="#c3c8f7"/><path d="M9.1 19.2 L6.1 17.3 L9.1 15.4Z" fill="#c3c8f7"/><path d="M10.4 12.4 L9.6 9.0 L13.0 9.8Z" fill="#c3c8f7"/><path d="M16.0 8.5 L17.9 5.5 L19.8 8.5Z" fill="#c3c8f7"/><path d="M22.8 9.8 L26.2 9.0 L25.4 12.4Z" fill="#c3c8f7"/><circle cx="17.9" cy="17.3" r="9.6" fill="#c3c8f7"/><circle cx="17.9" cy="17.3" r="7.5" fill="#3a3a3a"/><circle cx="20.6" cy="14.8" r="5.7" fill="#c3c8f7"/><path d="M34.5 29.5 L34.5 34.5 L29.5 34.5Z" fill="#8c8c8c"/></svg>
<svg style="left:1430px;top:516.1px;" width="36" height="36" viewBox="0 0 36 36"><rect x="6.3" y="15.5" width="14.9" height="10.8" rx="2" fill="none" stroke="#c3c8f7" stroke-width="1.6" stroke-linecap="round" stroke-linejoin="round"/><path d="M8.5 15.5 V9.7 H18.4" fill="none" stroke="#c3c8f7" stroke-width="1.6" stroke-linecap="round" stroke-linejoin="round" stroke-linejoin="miter"/><path d="M23.2 20.1 L30 15.3 V24.9Z" fill="#c3c8f7" stroke="#c3c8f7" stroke-width="0.8" stroke-linejoin="round"/><path d="M34.5 29.5 L34.5 34.5 L29.5 34.5Z" fill="#8c8c8c"/></svg>
<svg style="left:1430px;top:551.9px;" width="36" height="36" viewBox="0 0 36 36"><path d="M8.5 7.2 H27.6 L25.1 19.6 H11.8Z" fill="none" stroke="#c3c8f7" stroke-width="1.5" stroke-linecap="round" stroke-linejoin="round" stroke-linejoin="miter"/><path d="M18 14.6 V28.6 M14.3 25 L18 28.8 L21.7 25" fill="none" stroke="#c3c8f7" stroke-width="1.5" stroke-linecap="round" stroke-linejoin="round"/><path d="M34.5 29.5 L34.5 34.5 L29.5 34.5Z" fill="#8c8c8c"/></svg>
<div style="left:1430px;top:608.5px;width:36px;height:35.799999999999955px;background:#3a3a3a;border-radius:5px;"></div>
<svg style="left:1430px;top:608.5px;" width="36" height="36" viewBox="0 0 36 36"><path d="M20 7 L17.8 5.9 L8 11.7 V23.5 L17.8 29.5 L27.6 23.5 V15" fill="none" stroke="#4a4a4a" stroke-width="1.1" stroke-linecap="round" stroke-linejoin="round"/><path d="M15.9 19.5 L25.2 10.2" stroke="#565656" stroke-width="3" stroke-linecap="butt"/><path d="M14.2 21.4 L15 18.6 L16.9 20.5Z M25.9 9.5 L26.9 8.5" stroke="#565656" stroke-width="1.4" fill="#565656" stroke-linecap="round"/><path d="M34.5 29.5 L34.5 34.5 L29.5 34.5Z" fill="#555"/></svg>
<div style="left:1468px;top:55px;width:446px;height:21.7px;background:#1e1e1e;"></div>
<div style="left:1468px;top:55px;width:58.5px;height:21.7px;background:#2d2d2d;border-radius:4px 4px 0 0;"></div>
<span class="t" style="left:1479.00px;top:59px;font-size:11.0px;line-height:14.88px;color:#f0f0f0;transform:scaleX(0.9815);">Objects</span>
<span class="t" style="left:1540.00px;top:59px;font-size:11.0px;line-height:14.88px;color:#a8a8a8;transform:scaleX(0.9048);">Takes</span>
<svg style="left:1474px;top:83px;" width="14" height="10.0" viewBox="0 0 14 10.0"><rect x="0" y="0.0" width="14" height="2.0" rx="0.5" fill="#a6a6a6"/><rect x="0" y="4.0" width="14" height="2.0" rx="0.5" fill="#a6a6a6"/><rect x="0" y="8.0" width="14" height="2.0" rx="0.5" fill="#a6a6a6"/></svg>
<span class="t" style="left:1498.30px;top:81px;font-size:11.0px;line-height:14.88px;color:#c9c9c9;transform:scaleX(0.9027);">File</span>
<span class="t" style="left:1529.00px;top:81px;font-size:11.0px;line-height:14.88px;color:#c9c9c9;transform:scaleX(0.9496);">Edit</span>
<span class="t" style="left:1562.00px;top:81px;font-size:11.0px;line-height:14.88px;color:#c9c9c9;transform:scaleX(0.9728);">View</span>
<span class="t" style="left:1600.00px;top:81px;font-size:11.0px;line-height:14.88px;color:#c9c9c9;transform:scaleX(1.0066);">Object</span>
<span class="t" style="left:1646.00px;top:81px;font-size:11.0px;line-height:14.88px;color:#c9c9c9;transform:scaleX(0.9168);">Tags</span>
<span class="t" style="left:1682.00px;top:81px;font-size:11.0px;line-height:14.88px;color:#c9c9c9;transform:scaleX(0.9743);">Bookmarks</span>
<svg style="left:1837.4px;top:81.5px;" width="14" height="14" viewBox="0 0 14 14"><circle cx="5.4" cy="5.4" r="4.2" fill="none" stroke="#a2a2a2" stroke-width="1.6" stroke-linecap="round" stroke-linejoin="round"/><path d="M8.6 8.6 L12.8 12.8" fill="none" stroke="#a2a2a2" stroke-width="1.8" stroke-linecap="round" stroke-linejoin="round"/></svg>
<svg style="left:1857.5px;top:81px;" width="14" height="15" viewBox="0 0 14 15"><path d="M1.5 7 L7 1.8 L12.5 7 V13.3 H8.8 V9 H5.2 V13.3 H1.5Z" fill="none" stroke="#a2a2a2" stroke-width="1.6" stroke-linecap="round" stroke-linejoin="round"/></svg>
<svg style="left:1877px;top:82px;" width="14" height="14" viewBox="0 0 14 14"><path d="M0.8 2.5 H13.2 M3 6.8 H11 M5.2 11 H8.8" fill="none" stroke="#a2a2a2" stroke-width="1.7" stroke-linecap="round" stroke-linejoin="round" stroke-linecap="butt"/></svg>
<svg style="left:1896.8px;top:81.2px;" width="15" height="15" viewBox="0 0 15 15"><path d="M6.5 2 H2.8 a1.3 1.3 0 0 0 -1.3 1.3 V12 a1.3 1.3 0 0 0 1.3 1.3 H11.5 a1.3 1.3 0 0 0 1.3 -1.3 V8.5" fill="none" stroke="#a2a2a2" stroke-width="1.5" stroke-linecap="round" stroke-linejoin="round"/><path d="M9 1 H14 V6 M13.7 1.3 L6.5 8.5" fill="none" stroke="#a2a2a2" stroke-width="1.5" stroke-linecap="round" stroke-linejoin="round"/></svg>
<div style="left:1468px;top:99px;width:446px;height:1px;background:#222;"></div>
<div style="left:1468px;top:100.5px;width:446px;height:20px;background:#2a2a2a;"></div>
<div style="left:1468px;top:121px;width:446px;height:20px;background:#2f2f2f;"></div>
<div style="left:1468px;top:141.5px;width:446px;height:20px;background:#2a2a2a;"></div>
<div style="left:1622px;top:100px;width:1px;height:120px;background:#222;"></div>
<svg style="left:0;top:0" width="1915" height="230" viewBox="0 0 1915 230"><path d="M1476.2 100 V151 H1484.5 M1476.2 110.5 H1484.5 M1476.2 131 H1484.5" fill="none" stroke="#5a5a5a" stroke-width="1"/></svg>
<svg style="left:1485.5px;top:104.2px;" width="14" height="16" viewBox="0 0 14 16"><path d="M1.7 1.5 H12.3 L11.2 8.6 H2.8Z" fill="none" stroke="#e6e6e6" stroke-width="1.2" stroke-linecap="round" stroke-linejoin="round"/><path d="M7 5 V13 M5.2 11.3 L7 13.3 L8.8 11.3" fill="none" stroke="#e6e6e6" stroke-width="1.2" stroke-linecap="round" stroke-linejoin="round"/></svg>
<svg style="left:1485px;top:124px;" width="15" height="15" viewBox="0 0 15 15"><circle cx="7.3" cy="7" r="6.6" fill="#7dd3f0"/><path d="M1 8.5 Q7.3 12.5 13.6 8.5" fill="none" stroke="#2d2d2d" stroke-width="1.1"/></svg>
<svg style="left:1485px;top:143px;" width="16" height="17" viewBox="0 0 16 17"><path d="M1 5.5 L9 1.5 V8.5 L14.5 13 L6.5 15.8 L1 13Z" fill="#7dd3f0"/></svg>
<span class="t" style="left:1504.00px;top:105px;font-size:11.0px;line-height:14.88px;color:#c9c9c9;transform:scaleX(0.9592);">RS Area Light</span>
<span class="t" style="left:1504.00px;top:125px;font-size:11.0px;line-height:14.88px;color:#c9c9c9;transform:scaleX(0.9614);">Sphere</span>
<span class="t" style="left:1504.00px;top:145px;font-size:11.0px;line-height:14.88px;color:#c9c9c9;transform:scaleX(0.9727);">Backdrop</span>
<svg style="left:1579px;top:105.0px;" width="11" height="11" viewBox="0 0 11 11"><rect x="0.3" y="0.3" width="10.4" height="10.4" rx="2" fill="#4a4a4a"/><path d="M2.8 8.2 L8.2 2.8" stroke="#8c8c8c" stroke-width="1.9" stroke-linecap="round"/></svg>
<div style="left:1595.1px;top:103.25px;width:5.8px;height:5.8px;background:#555;border-radius:2.9px;"></div>
<div style="left:1595.1px;top:111.95px;width:5.8px;height:5.8px;background:#555;border-radius:2.9px;"></div>
<svg style="left:1604.5px;top:104.5px;" width="14" height="12" viewBox="0 0 14 12"><path d="M1.5 6.5 L5.2 10.2 L12.3 1.8" fill="none" stroke="#4cd964" stroke-width="2.1" stroke-linecap="round" stroke-linejoin="round"/></svg>
<svg style="left:1579px;top:125.5px;" width="11" height="11" viewBox="0 0 11 11"><rect x="0.3" y="0.3" width="10.4" height="10.4" rx="2" fill="#4a4a4a"/><path d="M2.8 8.2 L8.2 2.8" stroke="#8c8c8c" stroke-width="1.9" stroke-linecap="round"/></svg>
<div style="left:1595.1px;top:123.75px;width:5.8px;height:5.8px;background:#555;border-radius:2.9px;"></div>
<div style="left:1595.1px;top:132.45px;width:5.8px;height:5.8px;background:#555;border-radius:2.9px;"></div>
<svg style="left:1604.5px;top:125px;" width="14" height="12" viewBox="0 0 14 12"><path d="M1.5 6.5 L5.2 10.2 L12.3 1.8" fill="none" stroke="#4cd964" stroke-width="2.1" stroke-linecap="round" stroke-linejoin="round"/></svg>
<svg style="left:1579px;top:145.8px;" width="11" height="11" viewBox="0 0 11 11"><rect x="0.3" y="0.3" width="10.4" height="10.4" rx="2" fill="#4a4a4a"/><path d="M2.8 8.2 L8.2 2.8" stroke="#8c8c8c" stroke-width="1.9" stroke-linecap="round"/></svg>
<div style="left:1595.1px;top:144.05px;width:5.8px;height:5.8px;background:#555;border-radius:2.9px;"></div>
<div style="left:1595.1px;top:152.75px;width:5.8px;height:5.8px;background:#555;border-radius:2.9px;"></div>
<svg style="left:1604.5px;top:145.3px;" width="14" height="12" viewBox="0 0 14 12"><path d="M1.5 6.5 L5.2 10.2 L12.3 1.8" fill="none" stroke="#4cd964" stroke-width="2.1" stroke-linecap="round" stroke-linejoin="round"/></svg>
<svg style="left:1626.5px;top:124px;" width="14" height="13" viewBox="0 0 14 13"><path d="M1 12 V1 H12.5" fill="none" stroke="#8f8cf0" stroke-width="1.3"/><path d="M3.8 3.8 H10.5 Q10 9.5 3.8 10.3Z" fill="#b4b4b4"/></svg>
<svg style="left:1626.5px;top:144.3px;" width="14" height="13" viewBox="0 0 14 13"><path d="M1 12 V1 H12.5" fill="none" stroke="#8f8cf0" stroke-width="1.3"/><path d="M3.8 3.8 H10.5 Q10 9.5 3.8 10.3Z" fill="#b4b4b4"/></svg>
<div style="left:1644px;top:121px;width:18px;height:18px;background:#e89a3c;border-radius:1.5px;"></div>
<div style="left:1645px;top:122px;width:16px;height:16px;border-radius:0px;overflow:hidden;background:#555"><svg style="left:0;top:0" width="16" height="16"><use href="#thumb" width="16" height="16"/></svg></div>
<div style="left:1468px;top:220.5px;width:446px;height:3px;background:#1e1e1e;"></div>
<div style="left:1468px;top:223.5px;width:446px;height:21px;background:#1e1e1e;"></div>
<div style="left:1468px;top:223.5px;width:69px;height:21px;background:#2d2d2d;border-radius:4px 4px 0 0;"></div>
<span class="t" style="left:1479.00px;top:227px;font-size:11.0px;line-height:14.88px;color:#f0f0f0;transform:scaleX(1.0266);">Attributes</span>
<span class="t" style="left:1551.30px;top:227px;font-size:11.0px;line-height:14.88px;color:#a8a8a8;transform:scaleX(0.8996);">Layers</span>
<svg style="left:1474px;top:251px;" width="14" height="10.0" viewBox="0 0 14 10.0"><rect x="0" y="0.0" width="14" height="2.0" rx="0.5" fill="#a6a6a6"/><rect x="0" y="4.0" width="14" height="2.0" rx="0.5" fill="#a6a6a6"/><rect x="0" y="8.0" width="14" height="2.0" rx="0.5" fill="#a6a6a6"/></svg>
<span class="t" style="left:1498.30px;top:249px;font-size:11.0px;line-height:14.88px;color:#c9c9c9;transform:scaleX(1.0140);">Mode</span>
<span class="t" style="left:1541.50px;top:249px;font-size:11.0px;line-height:14.88px;color:#c9c9c9;transform:scaleX(0.9233);">Edit</span>
<span class="t" style="left:1574.30px;top:249px;font-size:11.0px;line-height:14.88px;color:#c9c9c9;transform:scaleX(0.9432);">User Data</span>
<svg style="left:1757px;top:249px;" width="14" height="14" viewBox="0 0 14 14"><path d="M13 7 H1.5 M6.5 2 L1.5 7 L6.5 12" fill="none" stroke="#a2a2a2" stroke-width="1.7" stroke-linecap="round" stroke-linejoin="round"/></svg>
<svg style="left:1777.5px;top:249px;" width="14" height="14" viewBox="0 0 14 14"><path d="M1 7 H12.5 M7.5 2 L12.5 7 L7.5 12" fill="none" stroke="#4e4e4e" stroke-width="1.5" stroke-linecap="round" stroke-linejoin="round"/></svg>
<svg style="left:1797.5px;top:249px;" width="13" height="14" viewBox="0 0 13 14"><path d="M6.2 13 V1.5 M1.2 6.5 L6.2 1.5 L11.2 6.5" fill="none" stroke="#a2a2a2" stroke-width="1.7" stroke-linecap="round" stroke-linejoin="round"/></svg>
<svg style="left:1817.3px;top:249.5px;" width="14" height="14" viewBox="0 0 14 14"><circle cx="5.4" cy="5.4" r="4.2" fill="none" stroke="#a2a2a2" stroke-width="1.6" stroke-linecap="round" stroke-linejoin="round"/><path d="M8.6 8.6 L12.8 12.8" fill="none" stroke="#a2a2a2" stroke-width="1.8" stroke-linecap="round" stroke-linejoin="round"/></svg>
<svg style="left:1837px;top:250px;" width="14" height="14" viewBox="0 0 14 14"><path d="M0.8 2.5 H13.2 M3 6.8 H11 M5.2 11 H8.8" fill="none" stroke="#a2a2a2" stroke-width="1.7" stroke-linecap="round" stroke-linejoin="round" stroke-linecap="butt"/></svg>
<svg style="left:1857.5px;top:248.5px;" width="12" height="15" viewBox="0 0 12 15"><rect x="1.2" y="6.5" width="9.6" height="7.5" rx="1" fill="none" stroke="#a2a2a2" stroke-width="1.5" stroke-linecap="round" stroke-linejoin="round"/><path d="M3.4 6.5 V4.2 a2.6 2.6 0 0 1 5.2 0 V6.5" fill="none" stroke="#a2a2a2" stroke-width="1.5" stroke-linecap="round" stroke-linejoin="round"/><circle cx="6" cy="10.2" r="1.1" fill="#a2a2a2"/></svg>
<svg style="left:1876px;top:248.5px;" width="16" height="16" viewBox="0 0 16 16"><circle cx="8" cy="8" r="6.6" fill="none" stroke="#a2a2a2" stroke-width="1.5" stroke-linecap="round" stroke-linejoin="round"/><circle cx="8" cy="8" r="2" fill="none" stroke="#a2a2a2" stroke-width="1.5" stroke-linecap="round" stroke-linejoin="round"/></svg>
<svg style="left:1896.8px;top:249px;" width="15" height="15" viewBox="0 0 15 15"><path d="M6.5 2 H2.8 a1.3 1.3 0 0 0 -1.3 1.3 V12 a1.3 1.3 0 0 0 1.3 1.3 H11.5 a1.3 1.3 0 0 0 1.3 -1.3 V8.5" fill="none" stroke="#a2a2a2" stroke-width="1.5" stroke-linecap="round" stroke-linejoin="round"/><path d="M9 1 H14 V6 M13.7 1.3 L6.5 8.5" fill="none" stroke="#a2a2a2" stroke-width="1.5" stroke-linecap="round" stroke-linejoin="round"/></svg>
<div style="left:1468px;top:266.8px;width:446px;height:1px;background:#222;"></div>
<div style="left:1473.8px;top:271px;width:22.4px;height:22.4px;border-radius:3px;overflow:hidden;background:#555"><svg style="left:0;top:0" width="22.4" height="22.4"><use href="#thumb" width="22.4" height="22.4"/></svg></div>
<span class="t" style="left:1500.40px;top:275px;font-size:11.0px;line-height:14.88px;color:#c9c9c9;transform:scaleX(1.0207);">Material [Mat]</span>
<div style="left:1807.2px;top:273px;width:100px;height:18px;background:#3a3a3a;border-radius:9px 7px 7px 9px;"></div>
<span class="t" style="left:1814.00px;top:276px;font-size:11.0px;line-height:14.88px;color:#dcdcdc;transform:scaleX(0.9763);">Custom</span>
<div style="left:1886.5px;top:273px;width:1px;height:18px;background:#2d2d2d;"></div>
<svg style="left:1893.3px;top:279.2px;" width="9" height="6" viewBox="0 0 9 6"><path d="M0.5 0.8 H8 L4.25 4.8Z" fill="#c4c4c4"/></svg>
<div style="left:1476px;top:297.4px;width:42.700000000000045px;height:18.8px;background:#3a3a3a;border-radius:5px;"></div>
<span class="t" style="left:1485.40px;top:300px;font-size:11.0px;line-height:14.88px;color:#d0d0d0;transform:scaleX(0.8848);">Basic</span>
<div style="left:1523px;top:297.4px;width:93px;height:18.8px;background:#5659a6;border-radius:5px;"></div>
<span class="t" style="left:1532.20px;top:300px;font-size:11.0px;line-height:14.88px;color:#ffffff;transform:scaleX(0.9507);">Base Properties</span>
<div style="left:1619.8px;top:297.4px;width:86.20000000000005px;height:18.8px;background:#3a3a3a;border-radius:5px;"></div>
<span class="t" style="left:1628.80px;top:300px;font-size:11.0px;line-height:14.88px;color:#d0d0d0;transform:scaleX(1.0175);">Optimizations</span>
<div style="left:1710px;top:297.4px;width:66px;height:18.8px;background:#3a3a3a;border-radius:5px;"></div>
<span class="t" style="left:1719.00px;top:300px;font-size:11.0px;line-height:14.88px;color:#d0d0d0;transform:scaleX(0.9730);">Advanced</span>
<div style="left:1780px;top:297.4px;width:62px;height:18.8px;background:#3a3a3a;border-radius:5px;"></div>
<span class="t" style="left:1789.00px;top:300px;font-size:11.0px;line-height:14.88px;color:#d0d0d0;transform:scaleX(1.0283);">Viewport</span>
<div style="left:1846px;top:297.4px;width:50px;height:18.8px;background:#3a3a3a;border-radius:5px;"></div>
<span class="t" style="left:1855.00px;top:300px;font-size:11.0px;line-height:14.88px;color:#d0d0d0;transform:scaleX(0.9632);">Assign</span>
<div style="left:1474.7px;top:324.7px;width:123px;height:122px;background:#1c1c1c;"></div>
<div style="left:1475.7px;top:325.7px;width:121px;height:121px;border-radius:0px;overflow:hidden;background:#555"><svg style="left:0;top:0" width="121" height="121"><use href="#thumb" width="121" height="121"/></svg></div>
<div style="left:1900px;top:320px;width:3.7px;height:395px;background:#4a4a4a;border-radius:2px;"></div>
<span class="t" style="left:1476.20px;top:453px;font-size:11.0px;line-height:14.88px;color:#ececec;transform:scaleX(1.0401);">Base Properties</span>
<div style="left:1475px;top:472px;width:418px;height:1px;background:#3b3b3b;"></div>
<svg style="left:1485px;top:480.5px;" width="8" height="8" viewBox="0 0 8 8"><path d="M1 2 L4 5.2 L7 2" fill="none" stroke="#c4c4c4" stroke-width="1.2" stroke-linecap="round" stroke-linejoin="round"/></svg>
<span class="t" style="left:1498.40px;top:479px;font-size:9.72px;line-height:13.76px;color:#e4e4e4;transform:scaleX(0.8887);font-weight:bold;">BASE</span>
<svg style="left:1485px;top:502.5px;" width="12" height="12" viewBox="0 0 12 12"><path d="M6 1.4 L10.6 6 L6 10.6 L1.4 6Z" fill="none" stroke="#a8a8a8" stroke-width="1.1" stroke-linecap="round" stroke-linejoin="round"/></svg>
<span class="t" style="left:1506.10px;top:502px;font-size:11.0px;line-height:14.88px;color:#c4c4c4;transform:scaleX(0.9701);">Color</span>
<svg style="left:1608.8px;top:503.5px;" width="10" height="10" viewBox="0 0 10 10"><circle cx="5" cy="5" r="3.5" fill="none" stroke="#c0c0c0" stroke-width="1.1" stroke-linecap="round" stroke-linejoin="round"/></svg>
<svg style="left:1623.8px;top:504.5px;" width="6" height="8" viewBox="0 0 6 8"><path d="M1 0.8 L4.6 4 L1 7.2" fill="none" stroke="#c4c4c4" stroke-width="1.1" stroke-linecap="round" stroke-linejoin="round"/></svg>
<div style="left:1631.8px;top:499.9px;width:66.3px;height:15px;background:#808080;"></div>
<svg style="left:1707.8px;top:499.0px;" width="16" height="16" viewBox="0 0 16 16"><path d="M1.5 14.5 L2.3 11.5 L9 4.8 L11.2 7 L4.5 13.7Z" fill="none" stroke="#a8a8a8" stroke-width="1.1" stroke-linecap="round" stroke-linejoin="round"/><path d="M8.3 3.3 L12.7 7.7" fill="none" stroke="#a8a8a8" stroke-width="1.8" stroke-linecap="round" stroke-linejoin="round"/><path d="M10.5 5.5 L12.3 3.7" fill="none" stroke="#a8a8a8" stroke-width="2.6" stroke-linecap="round" stroke-linejoin="round"/><circle cx="13" cy="3" r="2.1" fill="#a8a8a8"/></svg>
<svg style="left:1485px;top:523.8px;" width="12" height="12" viewBox="0 0 12 12"><path d="M6 1.4 L10.6 6 L6 10.6 L1.4 6Z" fill="none" stroke="#a8a8a8" stroke-width="1.1" stroke-linecap="round" stroke-linejoin="round"/></svg>
<span class="t" style="left:1506.10px;top:523px;font-size:11.0px;line-height:14.88px;color:#c4c4c4;transform:scaleX(1.0137);">Weight</span>
<svg style="left:1608.8px;top:524.8px;" width="10" height="10" viewBox="0 0 10 10"><circle cx="5" cy="5" r="3.5" fill="none" stroke="#c0c0c0" stroke-width="1.1" stroke-linecap="round" stroke-linejoin="round"/></svg>
<div style="left:1631.8px;top:521.3px;width:74.0px;height:17px;background:#191919;border-radius:4px;"></div>
<span class="t" style="left:1665.80px;top:523px;font-size:11.0px;line-height:14.88px;color:#e4e4e4;transform:scaleX(0.9818);">1</span>
<div style="left:1710.6px;top:527.1999999999999px;width:181.9000000000001px;height:3.2px;background:#1b1b1b;border-radius:1.6px;"></div>
<div style="left:1710.6px;top:527.1999999999999px;width:180.10000000000014px;height:3.2px;background:#5b60ad;border-radius:1.6px;"></div>
<div style="left:1888.9px;top:523.1999999999999px;width:3.6px;height:11.2px;background:#bdbdbd;border-radius:1.8px;"></div>
<svg style="left:1485px;top:545.1px;" width="12" height="12" viewBox="0 0 12 12"><path d="M6 1.4 L10.6 6 L6 10.6 L1.4 6Z" fill="none" stroke="#a8a8a8" stroke-width="1.1" stroke-linecap="round" stroke-linejoin="round"/></svg>
<span class="t" style="left:1506.10px;top:545px;font-size:11.0px;line-height:14.88px;color:#c4c4c4;transform:scaleX(1.0142);">Diffuse Model</span>
<svg style="left:1608.8px;top:546.1px;" width="10" height="10" viewBox="0 0 10 10"><circle cx="5" cy="5" r="3.5" fill="none" stroke="#c0c0c0" stroke-width="1.1" stroke-linecap="round" stroke-linejoin="round"/></svg>
<div style="left:1631.8px;top:542.6px;width:261.0px;height:17.2px;background:#3a3a3a;border-radius:4px;"></div>
<span class="t" style="left:1639.00px;top:544px;font-size:11.0px;line-height:14.88px;color:#dcdcdc;transform:scaleX(0.9921);">Oren-Nayar</span>
<svg style="left:1879px;top:548.6px;" width="9" height="6" viewBox="0 0 9 6"><path d="M0.5 0.8 H8 L4.25 4.8Z" fill="#c4c4c4"/></svg>
<svg style="left:1485px;top:566.1px;" width="12" height="12" viewBox="0 0 12 12"><path d="M6 1.4 L10.6 6 L6 10.6 L1.4 6Z" fill="none" stroke="#a8a8a8" stroke-width="1.1" stroke-linecap="round" stroke-linejoin="round"/></svg>
<span class="t" style="left:1506.10px;top:566px;font-size:11.0px;line-height:14.88px;color:#c4c4c4;transform:scaleX(0.9705);">Diffuse Roughness</span>
<svg style="left:1608.8px;top:567.1px;" width="10" height="10" viewBox="0 0 10 10"><circle cx="5" cy="5" r="3.5" fill="none" stroke="#c0c0c0" stroke-width="1.1" stroke-linecap="round" stroke-linejoin="round"/></svg>
<div style="left:1631.8px;top:563.6px;width:74.0px;height:17px;background:#191919;border-radius:4px;"></div>
<span class="t" style="left:1665.80px;top:566px;font-size:11.0px;line-height:14.88px;color:#e4e4e4;transform:scaleX(0.9818);">0</span>
<div style="left:1710.6px;top:569.5px;width:181.9000000000001px;height:3.2px;background:#1b1b1b;border-radius:1.6px;"></div>
<div style="left:1710.6000000000001px;top:565.5px;width:3.6px;height:11.2px;background:#bdbdbd;border-radius:1.8px;"></div>
<svg style="left:1485px;top:588px;" width="12" height="12" viewBox="0 0 12 12"><path d="M6 1.4 L10.6 6 L6 10.6 L1.4 6Z" fill="none" stroke="#a8a8a8" stroke-width="1.1" stroke-linecap="round" stroke-linejoin="round"/></svg>
<span class="t" style="left:1506.10px;top:588px;font-size:11.0px;line-height:14.88px;color:#c4c4c4;transform:scaleX(0.9774);">Metalness</span>
<svg style="left:1608.8px;top:589px;" width="10" height="10" viewBox="0 0 10 10"><circle cx="5" cy="5" r="3.5" fill="none" stroke="#c0c0c0" stroke-width="1.1" stroke-linecap="round" stroke-linejoin="round"/></svg>
<div style="left:1631.8px;top:585.5px;width:74.0px;height:17px;background:#191919;border-radius:4px;"></div>
<span class="t" style="left:1665.80px;top:588px;font-size:11.0px;line-height:14.88px;color:#e4e4e4;transform:scaleX(0.9818);">0</span>
<div style="left:1710.6px;top:591.4px;width:181.9000000000001px;height:3.2px;background:#1b1b1b;border-radius:1.6px;"></div>
<div style="left:1710.6000000000001px;top:587.4px;width:3.6px;height:11.2px;background:#bdbdbd;border-radius:1.8px;"></div>
<div style="left:1475px;top:614.7px;width:418px;height:1px;background:#3b3b3b;"></div>
<svg style="left:1485px;top:624.3px;" width="8" height="8" viewBox="0 0 8 8"><path d="M1 2 L4 5.2 L7 2" fill="none" stroke="#c4c4c4" stroke-width="1.2" stroke-linecap="round" stroke-linejoin="round"/></svg>
<span class="t" style="left:1498.40px;top:623px;font-size:9.72px;line-height:13.76px;color:#e4e4e4;transform:scaleX(0.9340);font-weight:bold;">REFLECTION</span>
<svg style="left:1485px;top:647px;" width="12" height="12" viewBox="0 0 12 12"><path d="M6 1.4 L10.6 6 L6 10.6 L1.4 6Z" fill="none" stroke="#a8a8a8" stroke-width="1.1" stroke-linecap="round" stroke-linejoin="round"/></svg>
<span class="t" style="left:1506.10px;top:646px;font-size:11.0px;line-height:14.88px;color:#c4c4c4;transform:scaleX(0.9701);">Color</span>
<svg style="left:1571.9px;top:648px;" width="10" height="10" viewBox="0 0 10 10"><circle cx="5" cy="5" r="3.5" fill="none" stroke="#c0c0c0" stroke-width="1.1" stroke-linecap="round" stroke-linejoin="round"/></svg>
<svg style="left:1586.9px;top:649px;" width="6" height="8" viewBox="0 0 6 8"><path d="M1 0.8 L4.6 4 L1 7.2" fill="none" stroke="#c4c4c4" stroke-width="1.1" stroke-linecap="round" stroke-linejoin="round"/></svg>
<div style="left:1595px;top:644.4px;width:66.3px;height:15px;background:#ffffff;"></div>
<svg style="left:1671px;top:643.5px;" width="16" height="16" viewBox="0 0 16 16"><path d="M1.5 14.5 L2.3 11.5 L9 4.8 L11.2 7 L4.5 13.7Z" fill="none" stroke="#a8a8a8" stroke-width="1.1" stroke-linecap="round" stroke-linejoin="round"/><path d="M8.3 3.3 L12.7 7.7" fill="none" stroke="#a8a8a8" stroke-width="1.8" stroke-linecap="round" stroke-linejoin="round"/><path d="M10.5 5.5 L12.3 3.7" fill="none" stroke="#a8a8a8" stroke-width="2.6" stroke-linecap="round" stroke-linejoin="round"/><circle cx="13" cy="3" r="2.1" fill="#a8a8a8"/></svg>
<svg style="left:1485px;top:668.2px;" width="12" height="12" viewBox="0 0 12 12"><path d="M6 1.4 L10.6 6 L6 10.6 L1.4 6Z" fill="none" stroke="#a8a8a8" stroke-width="1.1" stroke-linecap="round" stroke-linejoin="round"/></svg>
<span class="t" style="left:1506.10px;top:667px;font-size:11.0px;line-height:14.88px;color:#c4c4c4;transform:scaleX(1.0137);">Weight</span>
<svg style="left:1571.9px;top:669.2px;" width="10" height="10" viewBox="0 0 10 10"><circle cx="5" cy="5" r="3.5" fill="none" stroke="#c0c0c0" stroke-width="1.1" stroke-linecap="round" stroke-linejoin="round"/></svg>
<div style="left:1595px;top:665.7px;width:73.90000000000009px;height:17px;background:#191919;border-radius:4px;"></div>
<span class="t" style="left:1628.95px;top:667px;font-size:11.0px;line-height:14.88px;color:#e4e4e4;transform:scaleX(0.9818);">1</span>
<div style="left:1673.8px;top:671.6px;width:218.70000000000005px;height:3.2px;background:#1b1b1b;border-radius:1.6px;"></div>
<div style="left:1673.8px;top:671.6px;width:216.9000000000001px;height:3.2px;background:#5b60ad;border-radius:1.6px;"></div>
<div style="left:1888.9px;top:667.6px;width:3.6px;height:11.2px;background:#bdbdbd;border-radius:1.8px;"></div>
<svg style="left:1485px;top:690.1px;" width="12" height="12" viewBox="0 0 12 12"><path d="M6 1.4 L10.6 6 L6 10.6 L1.4 6Z" fill="none" stroke="#a8a8a8" stroke-width="1.1" stroke-linecap="round" stroke-linejoin="round"/></svg>
<span class="t" style="left:1506.10px;top:689px;font-size:11.0px;line-height:14.88px;color:#c4c4c4;transform:scaleX(0.9524);">Roughness</span>
<svg style="left:1571.9px;top:691.1px;" width="10" height="10" viewBox="0 0 10 10"><circle cx="5" cy="5" r="3.5" fill="none" stroke="#c0c0c0" stroke-width="1.1" stroke-linecap="round" stroke-linejoin="round"/></svg>
<div style="left:1595px;top:687.6px;width:73.90000000000009px;height:17px;background:#191919;border-radius:4px;"></div>
<span class="t" style="left:1624.44px;top:689px;font-size:11.0px;line-height:14.88px;color:#e4e4e4;transform:scaleX(0.9818);">0.2</span>
<div style="left:1673.8px;top:693.5px;width:218.70000000000005px;height:3.2px;background:#1b1b1b;border-radius:1.6px;"></div>
<div style="left:1673.8px;top:693.5px;width:42.90000000000009px;height:3.2px;background:#5b60ad;border-radius:1.6px;"></div>
<div style="left:1714.9px;top:689.5px;width:3.6px;height:11.2px;background:#bdbdbd;border-radius:1.8px;"></div>
<svg style="left:1485px;top:712.1px;" width="12" height="12" viewBox="0 0 12 12"><path d="M6 1.4 L10.6 6 L6 10.6 L1.4 6Z" fill="none" stroke="#a8a8a8" stroke-width="1.1" stroke-linecap="round" stroke-linejoin="round"/></svg>
<span class="t" style="left:1506.10px;top:711px;font-size:11.0px;line-height:14.88px;color:#c4c4c4;transform:scaleX(0.8949);">IOR</span>
<svg style="left:1571.9px;top:713.1px;" width="10" height="10" viewBox="0 0 10 10"><circle cx="5" cy="5" r="3.5" fill="none" stroke="#c0c0c0" stroke-width="1.1" stroke-linecap="round" stroke-linejoin="round"/></svg>
<div style="left:1595px;top:709.6px;width:73.90000000000009px;height:17px;background:#191919;border-radius:4px;"></div>
<span class="t" style="left:1624.44px;top:711px;font-size:11.0px;line-height:14.88px;color:#e4e4e4;transform:scaleX(0.9818);">1.5</span>
<div style="left:1673.8px;top:715.5px;width:218.70000000000005px;height:3.2px;background:#1b1b1b;border-radius:1.6px;"></div>
<div style="left:1673.8px;top:715.5px;width:109.10000000000014px;height:3.2px;background:#5b60ad;border-radius:1.6px;"></div>
<div style="left:1781.1000000000001px;top:711.5px;width:3.6px;height:11.2px;background:#bdbdbd;border-radius:1.8px;"></div>
<svg style="left:1485px;top:734.1px;" width="12" height="12" viewBox="0 0 12 12"><path d="M6 1.4 L10.6 6 L6 10.6 L1.4 6Z" fill="none" stroke="#a8a8a8" stroke-width="1.1" stroke-linecap="round" stroke-linejoin="round"/></svg>
<span class="t" style="left:1506.10px;top:733px;font-size:11.0px;line-height:14.88px;color:#c4c4c4;transform:scaleX(1.0199);">Anisotropy</span>
<svg style="left:1571.9px;top:735.1px;" width="10" height="10" viewBox="0 0 10 10"><circle cx="5" cy="5" r="3.5" fill="none" stroke="#c0c0c0" stroke-width="1.1" stroke-linecap="round" stroke-linejoin="round"/></svg>
<div style="left:1595px;top:731.6px;width:73.90000000000009px;height:17px;background:#191919;border-radius:4px;"></div>
<span class="t" style="left:1628.95px;top:733px;font-size:11.0px;line-height:14.88px;color:#e4e4e4;transform:scaleX(0.9818);">0</span>
<div style="left:1673.8px;top:737.5px;width:218.70000000000005px;height:3.2px;background:#1b1b1b;border-radius:1.6px;"></div>
<div style="left:1673.8px;top:733.5px;width:3.6px;height:11.2px;background:#bdbdbd;border-radius:1.8px;"></div>
<svg style="left:1485px;top:756px;" width="12" height="12" viewBox="0 0 12 12"><path d="M6 1.4 L10.6 6 L6 10.6 L1.4 6Z" fill="none" stroke="#a8a8a8" stroke-width="1.1" stroke-linecap="round" stroke-linejoin="round"/></svg>
<span class="t" style="left:1506.10px;top:755px;font-size:11.0px;line-height:14.88px;color:#c4c4c4;transform:scaleX(1.0008);">Rotation</span>
<svg style="left:1571.9px;top:757px;" width="10" height="10" viewBox="0 0 10 10"><circle cx="5" cy="5" r="3.5" fill="none" stroke="#c0c0c0" stroke-width="1.1" stroke-linecap="round" stroke-linejoin="round"/></svg>
<div style="left:1595px;top:753.5px;width:73.90000000000009px;height:17px;background:#191919;border-radius:4px;"></div>
<span class="t" style="left:1628.95px;top:755px;font-size:11.0px;line-height:14.88px;color:#e4e4e4;transform:scaleX(0.9818);">0</span>
<div style="left:1673.8px;top:759.4px;width:218.70000000000005px;height:3.2px;background:#1b1b1b;border-radius:1.6px;"></div>
<div style="left:1673.8px;top:755.4px;width:3.6px;height:11.2px;background:#bdbdbd;border-radius:1.8px;"></div>
<svg style="left:1485px;top:778px;" width="12" height="12" viewBox="0 0 12 12"><path d="M6 1.4 L10.6 6 L6 10.6 L1.4 6Z" fill="none" stroke="#a8a8a8" stroke-width="1.1" stroke-linecap="round" stroke-linejoin="round"/></svg>
<span class="t" style="left:1506.10px;top:777px;font-size:11.0px;line-height:14.88px;color:#c4c4c4;transform:scaleX(0.9464);">Samples</span>
<svg style="left:1571.9px;top:779px;" width="10" height="10" viewBox="0 0 10 10"><circle cx="5" cy="5" r="3.5" fill="none" stroke="#c0c0c0" stroke-width="1.1" stroke-linecap="round" stroke-linejoin="round"/></svg>
<div style="left:1595px;top:775.5px;width:73.90000000000009px;height:17px;background:#191919;border-radius:4px;"></div>
<span class="t" style="left:1625.94px;top:777px;font-size:11.0px;line-height:14.88px;color:#e4e4e4;transform:scaleX(0.9818);">16</span>
<div style="left:1673.8px;top:781.4px;width:218.70000000000005px;height:3.2px;background:#1b1b1b;border-radius:1.6px;"></div>
<div style="left:1673.8px;top:781.4px;width:6.0px;height:3.2px;background:#5b60ad;border-radius:1.6px;"></div>
<div style="left:1678.0px;top:777.4px;width:3.6px;height:11.2px;background:#bdbdbd;border-radius:1.8px;"></div>
<div style="left:1475px;top:804.2px;width:418px;height:1px;background:#3b3b3b;"></div>
<svg style="left:1485px;top:814.2px;" width="8" height="8" viewBox="0 0 8 8"><path d="M1 2 L4 5.2 L7 2" fill="none" stroke="#c4c4c4" stroke-width="1.2" stroke-linecap="round" stroke-linejoin="round"/></svg>
<span class="t" style="left:1498.40px;top:813px;font-size:9.72px;line-height:13.76px;color:#e4e4e4;transform:scaleX(1.0064);font-weight:bold;">TRANSMISSION</span>
<svg style="left:1485px;top:836.6px;" width="12" height="12" viewBox="0 0 12 12"><path d="M6 1.4 L10.6 6 L6 10.6 L1.4 6Z" fill="none" stroke="#a8a8a8" stroke-width="1.1" stroke-linecap="round" stroke-linejoin="round"/></svg>
<span class="t" style="left:1506.10px;top:836px;font-size:11.0px;line-height:14.88px;color:#c4c4c4;transform:scaleX(0.9701);">Color</span>
<svg style="left:1608.8px;top:837.6px;" width="10" height="10" viewBox="0 0 10 10"><circle cx="5" cy="5" r="3.5" fill="none" stroke="#c0c0c0" stroke-width="1.1" stroke-linecap="round" stroke-linejoin="round"/></svg>
<svg style="left:1623.8px;top:838.6px;" width="6" height="8" viewBox="0 0 6 8"><path d="M1 0.8 L4.6 4 L1 7.2" fill="none" stroke="#c4c4c4" stroke-width="1.1" stroke-linecap="round" stroke-linejoin="round"/></svg>
<div style="left:1631.8px;top:834.0px;width:66.3px;height:15px;background:#ffffff;"></div>
<svg style="left:1707.8px;top:833.1px;" width="16" height="16" viewBox="0 0 16 16"><path d="M1.5 14.5 L2.3 11.5 L9 4.8 L11.2 7 L4.5 13.7Z" fill="none" stroke="#a8a8a8" stroke-width="1.1" stroke-linecap="round" stroke-linejoin="round"/><path d="M8.3 3.3 L12.7 7.7" fill="none" stroke="#a8a8a8" stroke-width="1.8" stroke-linecap="round" stroke-linejoin="round"/><path d="M10.5 5.5 L12.3 3.7" fill="none" stroke="#a8a8a8" stroke-width="2.6" stroke-linecap="round" stroke-linejoin="round"/><circle cx="13" cy="3" r="2.1" fill="#a8a8a8"/></svg>
<svg style="left:1485px;top:857.8px;" width="12" height="12" viewBox="0 0 12 12"><path d="M6 1.4 L10.6 6 L6 10.6 L1.4 6Z" fill="none" stroke="#a8a8a8" stroke-width="1.1" stroke-linecap="round" stroke-linejoin="round"/></svg>
<span class="t" style="left:1506.10px;top:857px;font-size:11.0px;line-height:14.88px;color:#c4c4c4;transform:scaleX(1.0137);">Weight</span>
<svg style="left:1608.8px;top:858.8px;" width="10" height="10" viewBox="0 0 10 10"><circle cx="5" cy="5" r="3.5" fill="none" stroke="#c0c0c0" stroke-width="1.1" stroke-linecap="round" stroke-linejoin="round"/></svg>
<div style="left:1631.8px;top:855.3px;width:74.0px;height:17px;background:#191919;border-radius:4px;"></div>
<span class="t" style="left:1665.80px;top:857px;font-size:11.0px;line-height:14.88px;color:#e4e4e4;transform:scaleX(0.9818);">0</span>
<div style="left:1710.6px;top:861.1999999999999px;width:181.9000000000001px;height:3.2px;background:#1b1b1b;border-radius:1.6px;"></div>
<div style="left:1710.6000000000001px;top:857.1999999999999px;width:3.6px;height:11.2px;background:#bdbdbd;border-radius:1.8px;"></div>
<svg style="left:1485px;top:879.8px;" width="12" height="12" viewBox="0 0 12 12"><path d="M6 1.4 L10.6 6 L6 10.6 L1.4 6Z" fill="none" stroke="#a8a8a8" stroke-width="1.1" stroke-linecap="round" stroke-linejoin="round"/></svg>
<span class="t" style="left:1506.10px;top:879px;font-size:11.0px;line-height:14.88px;color:#c4c4c4;transform:scaleX(0.9422);">Extra Roughness</span>
<svg style="left:1608.8px;top:880.8px;" width="10" height="10" viewBox="0 0 10 10"><circle cx="5" cy="5" r="3.5" fill="none" stroke="#c0c0c0" stroke-width="1.1" stroke-linecap="round" stroke-linejoin="round"/></svg>
<div style="left:1631.8px;top:877.3px;width:74.0px;height:17px;background:#191919;border-radius:4px;"></div>
<span class="t" style="left:1665.80px;top:879px;font-size:11.0px;line-height:14.88px;color:#e4e4e4;transform:scaleX(0.9818);">0</span>
<div style="left:1710.6px;top:883.1999999999999px;width:181.9000000000001px;height:3.2px;background:#1b1b1b;border-radius:1.6px;"></div>
<div style="left:1710.6px;top:883.1999999999999px;width:90.10000000000014px;height:3.2px;background:#5b60ad;border-radius:1.6px;"></div>
<div style="left:1798.9px;top:879.1999999999999px;width:3.6px;height:11.2px;background:#bdbdbd;border-radius:1.8px;"></div>
<svg style="left:1485px;top:901.8px;" width="12" height="12" viewBox="0 0 12 12"><path d="M6 1.4 L10.6 6 L6 10.6 L1.4 6Z" fill="none" stroke="#a8a8a8" stroke-width="1.1" stroke-linecap="round" stroke-linejoin="round"/></svg>
<span class="t" style="left:1506.10px;top:901px;font-size:11.0px;line-height:14.88px;color:#c4c4c4;transform:scaleX(0.9464);">Samples</span>
<svg style="left:1608.8px;top:902.8px;" width="10" height="10" viewBox="0 0 10 10"><circle cx="5" cy="5" r="3.5" fill="none" stroke="#c0c0c0" stroke-width="1.1" stroke-linecap="round" stroke-linejoin="round"/></svg>
<div style="left:1631.8px;top:899.3px;width:74.0px;height:17px;background:#191919;border-radius:4px;"></div>
<span class="t" style="left:1665.80px;top:901px;font-size:11.0px;line-height:14.88px;color:#e4e4e4;transform:scaleX(0.9818);">8</span>
<div style="left:1710.6px;top:905.1999999999999px;width:181.9000000000001px;height:3.2px;background:#1b1b1b;border-radius:1.6px;"></div>
<div style="left:1710.6px;top:905.1999999999999px;width:2.2000000000000455px;height:3.2px;background:#5b60ad;border-radius:1.6px;"></div>
<div style="left:1711.0px;top:901.1999999999999px;width:3.6px;height:11.2px;background:#bdbdbd;border-radius:1.8px;"></div>
<svg style="left:1485px;top:923.7px;" width="12" height="12" viewBox="0 0 12 12"><path d="M6 1.4 L10.6 6 L6 10.6 L1.4 6Z" fill="none" stroke="#a8a8a8" stroke-width="1.1" stroke-linecap="round" stroke-linejoin="round"/></svg>
<span class="t" style="left:1506.10px;top:923px;font-size:11.0px;line-height:14.88px;color:#c4c4c4;transform:scaleX(1.0051);">Depth</span>
<svg style="left:1608.8px;top:924.7px;" width="10" height="10" viewBox="0 0 10 10"><circle cx="5" cy="5" r="3.5" fill="none" stroke="#c0c0c0" stroke-width="1.1" stroke-linecap="round" stroke-linejoin="round"/></svg>
<div style="left:1631.8px;top:921.2px;width:74.0px;height:17px;background:#191919;border-radius:4px;"></div>
<span class="t" style="left:1665.80px;top:923px;font-size:11.0px;line-height:14.88px;color:#e4e4e4;transform:scaleX(0.9818);">0</span>
<div style="left:1710.6px;top:927.1px;width:181.9000000000001px;height:3.2px;background:#1b1b1b;border-radius:1.6px;"></div>
<div style="left:1710.6000000000001px;top:923.1px;width:3.6px;height:11.2px;background:#bdbdbd;border-radius:1.8px;"></div>
<svg style="left:1485px;top:944.7px;" width="12" height="12" viewBox="0 0 12 12"><path d="M6 1.4 L10.6 6 L6 10.6 L1.4 6Z" fill="none" stroke="#a8a8a8" stroke-width="1.1" stroke-linecap="round" stroke-linejoin="round"/></svg>
<span class="t" style="left:1506.10px;top:944px;font-size:11.0px;line-height:14.88px;color:#c4c4c4;transform:scaleX(0.9815);">Scatter Color</span>
<svg style="left:1608.8px;top:945.7px;" width="10" height="10" viewBox="0 0 10 10"><circle cx="5" cy="5" r="3.5" fill="none" stroke="#c0c0c0" stroke-width="1.1" stroke-linecap="round" stroke-linejoin="round"/></svg>
<svg style="left:1623.8px;top:946.7px;" width="6" height="8" viewBox="0 0 6 8"><path d="M1 0.8 L4.6 4 L1 7.2" fill="none" stroke="#c4c4c4" stroke-width="1.1" stroke-linecap="round" stroke-linejoin="round"/></svg>
<div style="left:1631.8px;top:942.1px;width:66.3px;height:15px;background:#000000;"></div>
<svg style="left:1707.8px;top:941.2px;" width="16" height="16" viewBox="0 0 16 16"><path d="M1.5 14.5 L2.3 11.5 L9 4.8 L11.2 7 L4.5 13.7Z" fill="none" stroke="#a8a8a8" stroke-width="1.1" stroke-linecap="round" stroke-linejoin="round"/><path d="M8.3 3.3 L12.7 7.7" fill="none" stroke="#a8a8a8" stroke-width="1.8" stroke-linecap="round" stroke-linejoin="round"/><path d="M10.5 5.5 L12.3 3.7" fill="none" stroke="#a8a8a8" stroke-width="2.6" stroke-linecap="round" stroke-linejoin="round"/><circle cx="13" cy="3" r="2.1" fill="#a8a8a8"/></svg>
<svg style="left:1485px;top:965.9px;" width="12" height="12" viewBox="0 0 12 12"><path d="M6 1.4 L10.6 6 L6 10.6 L1.4 6Z" fill="none" stroke="#a8a8a8" stroke-width="1.1" stroke-linecap="round" stroke-linejoin="round"/></svg>
<span class="t" style="left:1506.10px;top:965px;font-size:11.0px;line-height:14.88px;color:#c4c4c4;transform:scaleX(1.0027);">Scatter Anisotropy</span>
<svg style="left:1608.8px;top:966.9px;" width="10" height="10" viewBox="0 0 10 10"><circle cx="5" cy="5" r="3.5" fill="none" stroke="#c0c0c0" stroke-width="1.1" stroke-linecap="round" stroke-linejoin="round"/></svg>
<div style="left:1631.8px;top:963.4px;width:74.0px;height:17px;background:#191919;border-radius:4px;"></div>
<span class="t" style="left:1665.80px;top:965px;font-size:11.0px;line-height:14.88px;color:#e4e4e4;transform:scaleX(0.9818);">0</span>
<div style="left:1710.6px;top:969.3px;width:181.9000000000001px;height:3.2px;background:#1b1b1b;border-radius:1.6px;"></div>
<div style="left:1710.6px;top:969.3px;width:90.10000000000014px;height:3.2px;background:#5b60ad;border-radius:1.6px;"></div>
<div style="left:1798.9px;top:965.3px;width:3.6px;height:11.2px;background:#bdbdbd;border-radius:1.8px;"></div>
<svg style="left:1485px;top:987.8px;" width="12" height="12" viewBox="0 0 12 12"><path d="M6 1.4 L10.6 6 L6 10.6 L1.4 6Z" fill="none" stroke="#a8a8a8" stroke-width="1.1" stroke-linecap="round" stroke-linejoin="round"/></svg>
<span class="t" style="left:1506.10px;top:987px;font-size:11.0px;line-height:14.88px;color:#c4c4c4;transform:scaleX(0.9464);">Samples</span>
<svg style="left:1608.8px;top:988.8px;" width="10" height="10" viewBox="0 0 10 10"><circle cx="5" cy="5" r="3.5" fill="none" stroke="#c0c0c0" stroke-width="1.1" stroke-linecap="round" stroke-linejoin="round"/></svg>
<div style="left:1631.8px;top:985.3px;width:74.0px;height:17px;background:#191919;border-radius:4px;"></div>
<span class="t" style="left:1662.79px;top:987px;font-size:11.0px;line-height:14.88px;color:#e4e4e4;transform:scaleX(0.9818);">16</span>
<div style="left:1710.6px;top:991.1999999999999px;width:181.9000000000001px;height:3.2px;background:#1b1b1b;border-radius:1.6px;"></div>
<div style="left:1710.6000000000001px;top:987.1999999999999px;width:3.6px;height:11.2px;background:#bdbdbd;border-radius:1.8px;"></div>
<svg style="left:1485px;top:1009.8px;" width="12" height="12" viewBox="0 0 12 12"><path d="M6 1.4 L10.6 6 L6 10.6 L1.4 6Z" fill="none" stroke="#a8a8a8" stroke-width="1.1" stroke-linecap="round" stroke-linejoin="round"/></svg>
<span class="t" style="left:1506.10px;top:1009px;font-size:11.0px;line-height:14.88px;color:#c4c4c4;transform:scaleX(0.9826);">Dispersion (Abbe)</span>
<svg style="left:1608.8px;top:1010.8px;" width="10" height="10" viewBox="0 0 10 10"><circle cx="5" cy="5" r="3.5" fill="none" stroke="#c0c0c0" stroke-width="1.1" stroke-linecap="round" stroke-linejoin="round"/></svg>
<div style="left:1631.8px;top:1007.3px;width:74.0px;height:17px;background:#191919;border-radius:4px;"></div>
<span class="t" style="left:1665.80px;top:1009px;font-size:11.0px;line-height:14.88px;color:#e4e4e4;transform:scaleX(0.9818);">0</span>
<div style="left:1710.6px;top:1013.1999999999999px;width:181.9000000000001px;height:3.2px;background:#1b1b1b;border-radius:1.6px;"></div>
<div style="left:1710.6000000000001px;top:1009.1999999999999px;width:3.6px;height:11.2px;background:#bdbdbd;border-radius:1.8px;"></div>
<div style="left:1468px;top:1018.5px;width:447px;height:5px;background:#2d2d2d;"></div>
<div style="left:41px;top:941px;width:1386px;height:1px;background:repeating-linear-gradient(90deg,#5a5a5a 0 1px,transparent 1px 3px);"></div>
<div style="left:41px;top:944px;width:1386px;height:1px;background:repeating-linear-gradient(90deg,#5a5a5a 0 1px,transparent 1px 3px);"></div>
<div style="left:38px;top:953px;width:6px;height:1px;background:repeating-linear-gradient(90deg,#5a5a5a 0 1px,transparent 1px 3px);"></div>
<div style="left:38px;top:956px;width:6px;height:1px;background:repeating-linear-gradient(90deg,#5a5a5a 0 1px,transparent 1px 3px);"></div>
<div style="left:38px;top:959px;width:6px;height:1px;background:repeating-linear-gradient(90deg,#5a5a5a 0 1px,transparent 1px 3px);"></div>
<div style="left:38px;top:962px;width:6px;height:1px;background:repeating-linear-gradient(90deg,#5a5a5a 0 1px,transparent 1px 3px);"></div>
<div style="left:38px;top:965px;width:6px;height:1px;background:repeating-linear-gradient(90deg,#5a5a5a 0 1px,transparent 1px 3px);"></div>
<div style="left:38px;top:968px;width:6px;height:1px;background:repeating-linear-gradient(90deg,#5a5a5a 0 1px,transparent 1px 3px);"></div>
<div style="left:38px;top:971px;width:6px;height:1px;background:repeating-linear-gradient(90deg,#5a5a5a 0 1px,transparent 1px 3px);"></div>
<div style="left:38px;top:981px;width:6px;height:1px;background:repeating-linear-gradient(90deg,#5a5a5a 0 1px,transparent 1px 3px);"></div>
<div style="left:38px;top:984px;width:6px;height:1px;background:repeating-linear-gradient(90deg,#5a5a5a 0 1px,transparent 1px 3px);"></div>
<div style="left:38px;top:987px;width:6px;height:1px;background:repeating-linear-gradient(90deg,#5a5a5a 0 1px,transparent 1px 3px);"></div>
<div style="left:38px;top:990px;width:6px;height:1px;background:repeating-linear-gradient(90deg,#5a5a5a 0 1px,transparent 1px 3px);"></div>
<div style="left:38px;top:993px;width:6px;height:1px;background:repeating-linear-gradient(90deg,#5a5a5a 0 1px,transparent 1px 3px);"></div>
<div style="left:38px;top:996px;width:6px;height:1px;background:repeating-linear-gradient(90deg,#5a5a5a 0 1px,transparent 1px 3px);"></div>
<div style="left:38px;top:999px;width:6px;height:1px;background:repeating-linear-gradient(90deg,#5a5a5a 0 1px,transparent 1px 3px);"></div>
<div style="left:38px;top:1002px;width:6px;height:1px;background:repeating-linear-gradient(90deg,#5a5a5a 0 1px,transparent 1px 3px);"></div>
<div style="left:38px;top:1005px;width:6px;height:1px;background:repeating-linear-gradient(90deg,#5a5a5a 0 1px,transparent 1px 3px);"></div>
<div style="left:38px;top:1008px;width:6px;height:1px;background:repeating-linear-gradient(90deg,#5a5a5a 0 1px,transparent 1px 3px);"></div>
<div style="left:38px;top:1011px;width:6px;height:1px;background:repeating-linear-gradient(90deg,#5a5a5a 0 1px,transparent 1px 3px);"></div>
<div style="left:38px;top:1014px;width:6px;height:1px;background:repeating-linear-gradient(90deg,#5a5a5a 0 1px,transparent 1px 3px);"></div>
<div style="left:38px;top:1017px;width:6px;height:1px;background:repeating-linear-gradient(90deg,#5a5a5a 0 1px,transparent 1px 3px);"></div>
<div style="left:45px;top:948px;width:28px;height:28px;background:#3a3a3a;border-radius:5px;"></div>
<svg style="left:45px;top:948px;" width="28" height="28" viewBox="0 0 28 28"><path d="M14 6.8 L21.2 14 L14 21.2 L6.8 14Z" fill="none" stroke="#cfcfcf" stroke-width="2" stroke-linecap="round" stroke-linejoin="round" stroke-linejoin="miter"/></svg>
<div style="left:392px;top:948px;width:196px;height:28px;background:#3a3a3a;border-radius:5px;"></div>
<div style="left:419.5px;top:949px;width:1px;height:26px;background:#313131;"></div>
<div style="left:447.5px;top:949px;width:1px;height:26px;background:#313131;"></div>
<div style="left:475.5px;top:949px;width:1px;height:26px;background:#313131;"></div>
<div style="left:503.5px;top:949px;width:1px;height:26px;background:#313131;"></div>
<div style="left:531.5px;top:949px;width:1px;height:26px;background:#313131;"></div>
<div style="left:559.5px;top:949px;width:1px;height:26px;background:#313131;"></div>
<svg style="left:392px;top:948px;" width="28" height="28" viewBox="0 0 28 28"><rect x="7.3" y="8.5" width="2.6" height="11" fill="#bcbcbc"/><path d="M20 8.5 V19.5 L11 14Z" fill="#bcbcbc"/></svg>
<svg style="left:420px;top:948px;" width="28" height="28" viewBox="0 0 28 28"><path d="M9 11 L12 14 L9 17 L6 14Z" fill="none" stroke="#bcbcbc" stroke-width="1.2" stroke-linecap="round" stroke-linejoin="round"/><path d="M22 8.5 V19.5 L13.5 14Z" fill="#bcbcbc"/></svg>
<svg style="left:448px;top:948px;" width="28" height="28" viewBox="0 0 28 28"><path d="M16.5 8.5 V19.5 L7.5 14Z" fill="#bcbcbc"/><rect x="18" y="8.5" width="2.6" height="11" fill="#bcbcbc"/></svg>
<svg style="left:476px;top:948px;" width="28" height="28" viewBox="0 0 28 28"><path d="M9 6.5 V21.5 L21 14Z" fill="#bcbcbc"/></svg>
<svg style="left:504px;top:948px;" width="28" height="28" viewBox="0 0 28 28"><rect x="7.3" y="8.5" width="2.6" height="11" fill="#bcbcbc"/><path d="M11.5 8.5 V19.5 L20.5 14Z" fill="#bcbcbc"/></svg>
<svg style="left:532px;top:948px;" width="28" height="28" viewBox="0 0 28 28"><path d="M6 8.5 V19.5 L14.5 14Z" fill="#bcbcbc"/><path d="M19 11 L22 14 L19 17 L16 14Z" fill="none" stroke="#bcbcbc" stroke-width="1.2" stroke-linecap="round" stroke-linejoin="round"/></svg>
<svg style="left:560px;top:948px;" width="28" height="28" viewBox="0 0 28 28"><path d="M8 8.5 V19.5 L17 14Z" fill="#bcbcbc"/><rect x="18" y="8.5" width="2.6" height="11" fill="#bcbcbc"/></svg>
<div style="left:598.8px;top:948px;width:83.1px;height:28px;background:#3a3a3a;border-radius:5px;"></div>
<div style="left:598.8px;top:949px;width:55.4px;height:26px;background:#5659a6;border-radius:5px 0 0 5px;"></div>
<div style="left:626px;top:950px;width:1px;height:24px;background:#484b90;"></div>
<div style="left:654.2px;top:950px;width:1px;height:24px;background:#303030;"></div>
<svg style="left:598.8px;top:948px;" width="28" height="28" viewBox="0 0 28 28"><path d="M8 13 V10.5 a1.5 1.5 0 0 1 1.5 -1.5 H20 M17.5 6.2 L20.5 9 L17.5 11.8" fill="none" stroke="#cccccc" stroke-width="1.5" stroke-linecap="round" stroke-linejoin="round"/><path d="M20 15 V17.5 a1.5 1.5 0 0 1 -1.5 1.5 H8 M10.5 16.2 L7.5 19 L10.5 21.8" fill="none" stroke="#cccccc" stroke-width="1.5" stroke-linecap="round" stroke-linejoin="round"/><path d="M27 23 L27 27 L23 27Z" fill="#b0b0b0"/></svg>
<svg style="left:626.5px;top:948px;" width="28" height="28" viewBox="0 0 28 28"><rect x="6" y="16.8" width="1.6" height="4.2" fill="#d0d0d0"/><rect x="9" y="16.8" width="1.6" height="4.2" fill="#d0d0d0"/><rect x="12" y="16.8" width="1.6" height="4.2" fill="#d0d0d0"/><rect x="15.6" y="16.8" width="1.6" height="4.2" fill="#d0d0d0"/><rect x="18.4" y="16.8" width="4.4" height="4.2" fill="#d0d0d0"/><path d="M27 23 L27 27 L23 27Z" fill="#b0b0b0"/></svg>
<span class="t" style="left:636.80px;top:951px;font-size:10.5px;line-height:15.22px;color:#d4d4d4;transform:scaleX(1.0000);">A</span>
<svg style="left:654.5px;top:948px;" width="28" height="28" viewBox="0 0 28 28"><path d="M6.5 11.5 H10 L14.5 7.5 V20.5 L10 16.5 H6.5Z" fill="#bcbcbc"/><path d="M17.6 8 a7 7 0 0 1 0 12" fill="none" stroke="#bcbcbc" stroke-width="2.6" stroke-linecap="round" stroke-linejoin="round" stroke-linecap="butt"/></svg>
<div style="left:692.8px;top:952.6px;width:74.4px;height:18.8px;background:#191919;border-radius:4px;"></div>
<span class="t" style="left:721.70px;top:955px;font-size:11.0px;line-height:14.88px;color:#e4e4e4;transform:scaleX(0.9818);">0 F</span>
<div style="left:777.7px;top:948px;width:84.30000000000001px;height:28px;background:#3a3a3a;border-radius:5px;"></div>
<div style="left:805.3000000000001px;top:949px;width:1px;height:26px;background:#313131;"></div>
<div style="left:833.4000000000001px;top:949px;width:1px;height:26px;background:#313131;"></div>
<svg style="left:777.7px;top:948px;" width="28" height="28" viewBox="0 0 28 28"><circle cx="14" cy="14" r="9" fill="#5a3434"/><path d="M14 9 L19 14 L14 19 L9 14Z" fill="none" stroke="#8a4a4a" stroke-width="1.3" stroke-linecap="round" stroke-linejoin="round"/><path d="M27 23 L27 27 L23 27Z" fill="#a8a8a8"/></svg>
<svg style="left:805.8px;top:948px;" width="28" height="28" viewBox="0 0 28 28"><circle cx="14" cy="14" r="9" fill="#ea5a5c"/></svg>
<span class="t" style="left:815.46px;top:954px;font-size:13px;line-height:17.49px;color:#33282a;transform:scaleX(1.0000);">A</span>
<svg style="left:833.9px;top:948px;" width="28" height="28" viewBox="0 0 28 28"><circle cx="14" cy="14" r="9" fill="#c4c4c4"/><path d="M18.06 12.92 L19.70 12.92 L19.70 15.08 L18.06 15.08 L17.63 16.11 L18.79 17.27 L17.27 18.79 L16.11 17.63 L15.08 18.06 L15.08 19.70 L12.92 19.70 L12.92 18.06 L11.89 17.63 L10.73 18.79 L9.21 17.27 L10.37 16.11 L9.94 15.08 L8.30 15.08 L8.30 12.92 L9.94 12.92 L10.37 11.89 L9.21 10.73 L10.73 9.21 L11.89 10.37 L12.92 9.94 L12.92 8.30 L15.08 8.30 L15.08 9.94 L16.11 10.37 L17.27 9.21 L18.79 10.73 L17.63 11.89Z M11.90 14.00 a2.1 2.1 0 1 0 4.2 0 a2.1 2.1 0 1 0 -4.2 0Z" fill="#3a3a3a" fill-rule="evenodd" stroke="#3a3a3a" stroke-width="0.35" stroke-linejoin="round"/></svg>
<div style="left:871.7px;top:948px;width:56px;height:28px;background:#3a3a3a;border-radius:5px;"></div>
<div style="left:899.2px;top:949px;width:1px;height:26px;background:#313131;"></div>
<svg style="left:871.7px;top:948px;" width="28" height="28" viewBox="0 0 28 28"><circle cx="14" cy="14" r="9" fill="#c4c4c4"/><rect x="10.3" y="7.8" width="7.4" height="12.4" rx="3.7" fill="none" stroke="#3a3a3a" stroke-width="1.3"/><path d="M14 8 V13 M10.5 13 H17.5" stroke="#3a3a3a" stroke-width="1.2"/></svg>
<svg style="left:899.7px;top:948px;" width="28" height="28" viewBox="0 0 28 28"><path d="M17.5 5.8 A9 9 0 0 0 9.5 21.8 M21.8 9.5 A9 9 0 0 1 14 23" fill="none" stroke="#b8b8b8" stroke-width="1.4" stroke-linecap="round" stroke-linejoin="round"/><path d="M14 10.8 L17.2 14 L14 17.2 L10.8 14Z" fill="none" stroke="#b8b8b8" stroke-width="1.2" stroke-linecap="round" stroke-linejoin="round"/><path d="M15.6 12.4 L20.5 6.5" fill="none" stroke="#b8b8b8" stroke-width="1.3" stroke-linecap="round" stroke-linejoin="round"/></svg>
<div style="left:937.5px;top:948px;width:140px;height:28px;background:#3a3a3a;border-radius:5px;"></div>
<div style="left:965.0px;top:949px;width:1px;height:26px;background:#313131;"></div>
<div style="left:993.0px;top:949px;width:1px;height:26px;background:#313131;"></div>
<div style="left:1021.0px;top:949px;width:1px;height:26px;background:#313131;"></div>
<div style="left:1049.0px;top:949px;width:1px;height:26px;background:#313131;"></div>
<div style="left:1049.5px;top:949px;width:28px;height:26px;background:#5659a6;border-radius:0 5px 5px 0;"></div>
<svg style="left:937.5px;top:948px;" width="28" height="28" viewBox="0 0 28 28"><path d="M14 10 L18 14 L14 18 L10 14Z" fill="none" stroke="#c8c8c8" stroke-width="1.3" stroke-linecap="round" stroke-linejoin="round"/><path d="M11.5 7.5 L14 5 L16.5 7.5 M11.5 20.5 L14 23 L16.5 20.5 M7.5 11.5 L5 14 L7.5 16.5 M20.5 11.5 L23 14 L20.5 16.5" fill="none" stroke="#c8c8c8" stroke-width="1.3" stroke-linecap="round" stroke-linejoin="round"/></svg>
<svg style="left:965.5px;top:948px;" width="28" height="28" viewBox="0 0 28 28"><path d="M14 10 L18 14 L14 18 L10 14Z" fill="none" stroke="#c8c8c8" stroke-width="1.3" stroke-linecap="round" stroke-linejoin="round"/><path d="M11 6 A8.7 8.7 0 0 0 7.5 20 M17 22 A8.7 8.7 0 0 0 20.5 8" fill="none" stroke="#c8c8c8" stroke-width="1.3" stroke-linecap="round" stroke-linejoin="round"/><path d="M5 17.5 L7.3 20.5 L10.5 18.5 M18 9.5 L20.7 7.5 L23 10.5" fill="none" stroke="#c8c8c8" stroke-width="1.3" stroke-linecap="round" stroke-linejoin="round"/></svg>
<svg style="left:993.5px;top:948px;" width="28" height="28" viewBox="0 0 28 28"><path d="M9 11 V7.5 H21 V20 H17.5" fill="none" stroke="#c8c8c8" stroke-width="1.3" stroke-linecap="round" stroke-linejoin="round"/><path d="M11 13 L15 17 L11 21 L7 17Z" fill="none" stroke="#c8c8c8" stroke-width="1.3" stroke-linecap="round" stroke-linejoin="round"/><path d="M14.5 10.5 H18 V14" fill="none" stroke="#c8c8c8" stroke-width="1.3" stroke-linecap="round" stroke-linejoin="round"/></svg>
<svg style="left:1021.5px;top:948px;" width="28" height="28" viewBox="0 0 28 28"><rect x="5.5" y="7" width="17" height="6" rx="3" fill="#c8c8c8"/><rect x="5.5" y="15" width="17" height="6" rx="3" fill="#c8c8c8"/><circle cx="8.6" cy="10" r="1.3" fill="#3a3a3a"/><circle cx="19.4" cy="18" r="1.3" fill="#3a3a3a"/></svg>
<svg style="left:1049.5px;top:948px;" width="28" height="28" viewBox="0 0 28 28"><circle cx="12" cy="9.5" r="2.6" fill="#e8e8e8"/><path d="M9 22 C9 16 15 12 21 15 M7 8 L22 21" fill="none" stroke="#e8e8e8" stroke-width="1.6" stroke-linecap="round" stroke-linejoin="round"/><circle cx="19.5" cy="19.5" r="2.2" fill="#e8e8e8"/></svg>
<div style="left:1397px;top:948px;width:28px;height:28px;background:#3a3a3a;border-radius:5px;"></div>
<svg style="left:1397px;top:948px;" width="28" height="28" viewBox="0 0 28 28"><path d="M7.5 6.5 V20.5 H21.5" fill="none" stroke="#c8c8c8" stroke-width="1.3" stroke-linecap="round" stroke-linejoin="round"/><path d="M5.6 8.3 L7.5 5.3 L9.4 8.3Z M19.7 18.6 L22.7 20.5 L19.7 22.4Z" fill="#c8c8c8"/><path d="M8.5 19.5 L20 8 M16 7.5 H20.5 V12" fill="none" stroke="#c8c8c8" stroke-width="1.3" stroke-linecap="round" stroke-linejoin="round"/></svg>
<div style="left:48px;top:977.8px;width:9px;height:16px;background:#7074c0;"></div>
<div style="left:45px;top:994.3px;width:1381px;height:1px;background:#3a3a3a;"></div>
<svg style="left:0;top:0" width="1440" height="1010" viewBox="0 0 1440 1010"><rect x="51.50" y="996.5" width="1.2" height="4" fill="#a8a8a8"/><rect x="66.72" y="997.3" width="1.2" height="1.8" fill="#a0a0a0"/><rect x="81.93" y="997.3" width="1.2" height="1.8" fill="#a0a0a0"/><rect x="97.15" y="997.3" width="1.2" height="1.8" fill="#a0a0a0"/><rect x="112.36" y="997.3" width="1.2" height="1.8" fill="#a0a0a0"/><rect x="127.58" y="996.5" width="1.2" height="4" fill="#a8a8a8"/><rect x="142.79" y="997.3" width="1.2" height="1.8" fill="#a0a0a0"/><rect x="158.00" y="997.3" width="1.2" height="1.8" fill="#a0a0a0"/><rect x="173.22" y="997.3" width="1.2" height="1.8" fill="#a0a0a0"/><rect x="188.44" y="997.3" width="1.2" height="1.8" fill="#a0a0a0"/><rect x="203.65" y="996.5" width="1.2" height="4" fill="#a8a8a8"/><rect x="218.87" y="997.3" width="1.2" height="1.8" fill="#a0a0a0"/><rect x="234.08" y="997.3" width="1.2" height="1.8" fill="#a0a0a0"/><rect x="249.29" y="997.3" width="1.2" height="1.8" fill="#a0a0a0"/><rect x="264.51" y="997.3" width="1.2" height="1.8" fill="#a0a0a0"/><rect x="279.72" y="996.5" width="1.2" height="4" fill="#a8a8a8"/><rect x="294.94" y="997.3" width="1.2" height="1.8" fill="#a0a0a0"/><rect x="310.15" y="997.3" width="1.2" height="1.8" fill="#a0a0a0"/><rect x="325.37" y="997.3" width="1.2" height="1.8" fill="#a0a0a0"/><rect x="340.58" y="997.3" width="1.2" height="1.8" fill="#a0a0a0"/><rect x="355.80" y="996.5" width="1.2" height="4" fill="#a8a8a8"/><rect x="371.01" y="997.3" width="1.2" height="1.8" fill="#a0a0a0"/><rect x="386.23" y="997.3" width="1.2" height="1.8" fill="#a0a0a0"/><rect x="401.44" y="997.3" width="1.2" height="1.8" fill="#a0a0a0"/><rect x="416.66" y="997.3" width="1.2" height="1.8" fill="#a0a0a0"/><rect x="431.88" y="996.5" width="1.2" height="4" fill="#a8a8a8"/><rect x="447.09" y="997.3" width="1.2" height="1.8" fill="#a0a0a0"/><rect x="462.31" y="997.3" width="1.2" height="1.8" fill="#a0a0a0"/><rect x="477.52" y="997.3" width="1.2" height="1.8" fill="#a0a0a0"/><rect x="492.74" y="997.3" width="1.2" height="1.8" fill="#a0a0a0"/><rect x="507.95" y="996.5" width="1.2" height="4" fill="#a8a8a8"/><rect x="523.16" y="997.3" width="1.2" height="1.8" fill="#a0a0a0"/><rect x="538.38" y="997.3" width="1.2" height="1.8" fill="#a0a0a0"/><rect x="553.59" y="997.3" width="1.2" height="1.8" fill="#a0a0a0"/><rect x="568.81" y="997.3" width="1.2" height="1.8" fill="#a0a0a0"/><rect x="584.02" y="996.5" width="1.2" height="4" fill="#a8a8a8"/><rect x="599.24" y="997.3" width="1.2" height="1.8" fill="#a0a0a0"/><rect x="614.46" y="997.3" width="1.2" height="1.8" fill="#a0a0a0"/><rect x="629.67" y="997.3" width="1.2" height="1.8" fill="#a0a0a0"/><rect x="644.88" y="997.3" width="1.2" height="1.8" fill="#a0a0a0"/><rect x="660.10" y="996.5" width="1.2" height="4" fill="#a8a8a8"/><rect x="675.31" y="997.3" width="1.2" height="1.8" fill="#a0a0a0"/><rect x="690.53" y="997.3" width="1.2" height="1.8" fill="#a0a0a0"/><rect x="705.75" y="997.3" width="1.2" height="1.8" fill="#a0a0a0"/><rect x="720.96" y="997.3" width="1.2" height="1.8" fill="#a0a0a0"/><rect x="736.17" y="996.5" width="1.2" height="4" fill="#a8a8a8"/><rect x="751.39" y="997.3" width="1.2" height="1.8" fill="#a0a0a0"/><rect x="766.61" y="997.3" width="1.2" height="1.8" fill="#a0a0a0"/><rect x="781.82" y="997.3" width="1.2" height="1.8" fill="#a0a0a0"/><rect x="797.03" y="997.3" width="1.2" height="1.8" fill="#a0a0a0"/><rect x="812.25" y="996.5" width="1.2" height="4" fill="#a8a8a8"/><rect x="827.47" y="997.3" width="1.2" height="1.8" fill="#a0a0a0"/><rect x="842.68" y="997.3" width="1.2" height="1.8" fill="#a0a0a0"/><rect x="857.89" y="997.3" width="1.2" height="1.8" fill="#a0a0a0"/><rect x="873.11" y="997.3" width="1.2" height="1.8" fill="#a0a0a0"/><rect x="888.33" y="996.5" width="1.2" height="4" fill="#a8a8a8"/><rect x="903.54" y="997.3" width="1.2" height="1.8" fill="#a0a0a0"/><rect x="918.75" y="997.3" width="1.2" height="1.8" fill="#a0a0a0"/><rect x="933.97" y="997.3" width="1.2" height="1.8" fill="#a0a0a0"/><rect x="949.18" y="997.3" width="1.2" height="1.8" fill="#a0a0a0"/><rect x="964.40" y="996.5" width="1.2" height="4" fill="#a8a8a8"/><rect x="979.62" y="997.3" width="1.2" height="1.8" fill="#a0a0a0"/><rect x="994.83" y="997.3" width="1.2" height="1.8" fill="#a0a0a0"/><rect x="1010.04" y="997.3" width="1.2" height="1.8" fill="#a0a0a0"/><rect x="1025.26" y="997.3" width="1.2" height="1.8" fill="#a0a0a0"/><rect x="1040.48" y="996.5" width="1.2" height="4" fill="#a8a8a8"/><rect x="1055.69" y="997.3" width="1.2" height="1.8" fill="#a0a0a0"/><rect x="1070.90" y="997.3" width="1.2" height="1.8" fill="#a0a0a0"/><rect x="1086.12" y="997.3" width="1.2" height="1.8" fill="#a0a0a0"/><rect x="1101.34" y="997.3" width="1.2" height="1.8" fill="#a0a0a0"/><rect x="1116.55" y="996.5" width="1.2" height="4" fill="#a8a8a8"/><rect x="1131.77" y="997.3" width="1.2" height="1.8" fill="#a0a0a0"/><rect x="1146.98" y="997.3" width="1.2" height="1.8" fill="#a0a0a0"/><rect x="1162.19" y="997.3" width="1.2" height="1.8" fill="#a0a0a0"/><rect x="1177.41" y="997.3" width="1.2" height="1.8" fill="#a0a0a0"/><rect x="1192.62" y="996.5" width="1.2" height="4" fill="#a8a8a8"/><rect x="1207.84" y="997.3" width="1.2" height="1.8" fill="#a0a0a0"/><rect x="1223.06" y="997.3" width="1.2" height="1.8" fill="#a0a0a0"/><rect x="1238.27" y="997.3" width="1.2" height="1.8" fill="#a0a0a0"/><rect x="1253.48" y="997.3" width="1.2" height="1.8" fill="#a0a0a0"/><rect x="1268.70" y="996.5" width="1.2" height="4" fill="#a8a8a8"/><rect x="1283.91" y="997.3" width="1.2" height="1.8" fill="#a0a0a0"/><rect x="1299.13" y="997.3" width="1.2" height="1.8" fill="#a0a0a0"/><rect x="1314.35" y="997.3" width="1.2" height="1.8" fill="#a0a0a0"/><rect x="1329.56" y="997.3" width="1.2" height="1.8" fill="#a0a0a0"/><rect x="1344.78" y="996.5" width="1.2" height="4" fill="#a8a8a8"/><rect x="1359.99" y="997.3" width="1.2" height="1.8" fill="#a0a0a0"/><rect x="1375.20" y="997.3" width="1.2" height="1.8" fill="#a0a0a0"/><rect x="1390.42" y="997.3" width="1.2" height="1.8" fill="#a0a0a0"/><rect x="1405.63" y="997.3" width="1.2" height="1.8" fill="#a0a0a0"/><rect x="1420.85" y="996.5" width="1.2" height="4" fill="#a8a8a8"/><rect x="51.50" y="993" width="1.2" height="7.2999999999999545" fill="#d8d8d8"/><rect x="507.95" y="979" width="1.2" height="21.299999999999955" fill="#d8d8d8"/><rect x="964.40" y="979" width="1.2" height="21.299999999999955" fill="#d8d8d8"/><rect x="1420.85" y="979" width="1.2" height="21.299999999999955" fill="#d8d8d8"/></svg>
<span class="t" style="left:58.00px;top:978px;font-size:11.0px;line-height:14.88px;color:#7478cc;transform:scaleX(0.9818);">0</span>
<span class="t" style="left:125.17px;top:978px;font-size:11.0px;line-height:14.88px;color:#c9c9c9;transform:scaleX(0.9818);">5</span>
<span class="t" style="left:198.24px;top:978px;font-size:11.0px;line-height:14.88px;color:#c9c9c9;transform:scaleX(0.9818);">10</span>
<span class="t" style="left:274.32px;top:978px;font-size:11.0px;line-height:14.88px;color:#c9c9c9;transform:scaleX(0.9818);">15</span>
<span class="t" style="left:350.39px;top:978px;font-size:11.0px;line-height:14.88px;color:#c9c9c9;transform:scaleX(0.9818);">20</span>
<span class="t" style="left:426.47px;top:978px;font-size:11.0px;line-height:14.88px;color:#c9c9c9;transform:scaleX(0.9818);">25</span>
<span class="t" style="left:502.54px;top:978px;font-size:11.0px;line-height:14.88px;color:#c9c9c9;transform:scaleX(0.9818);">30</span>
<span class="t" style="left:578.62px;top:978px;font-size:11.0px;line-height:14.88px;color:#c9c9c9;transform:scaleX(0.9818);">35</span>
<span class="t" style="left:654.69px;top:978px;font-size:11.0px;line-height:14.88px;color:#c9c9c9;transform:scaleX(0.9818);">40</span>
<span class="t" style="left:730.77px;top:978px;font-size:11.0px;line-height:14.88px;color:#c9c9c9;transform:scaleX(0.9818);">45</span>
<span class="t" style="left:806.84px;top:978px;font-size:11.0px;line-height:14.88px;color:#c9c9c9;transform:scaleX(0.9818);">50</span>
<span class="t" style="left:882.92px;top:978px;font-size:11.0px;line-height:14.88px;color:#c9c9c9;transform:scaleX(0.9818);">55</span>
<span class="t" style="left:958.99px;top:978px;font-size:11.0px;line-height:14.88px;color:#c9c9c9;transform:scaleX(0.9818);">60</span>
<span class="t" style="left:1035.07px;top:978px;font-size:11.0px;line-height:14.88px;color:#c9c9c9;transform:scaleX(0.9818);">65</span>
<span class="t" style="left:1111.14px;top:978px;font-size:11.0px;line-height:14.88px;color:#c9c9c9;transform:scaleX(0.9818);">70</span>
<span class="t" style="left:1187.22px;top:978px;font-size:11.0px;line-height:14.88px;color:#c9c9c9;transform:scaleX(0.9818);">75</span>
<span class="t" style="left:1263.29px;top:978px;font-size:11.0px;line-height:14.88px;color:#c9c9c9;transform:scaleX(0.9818);">80</span>
<span class="t" style="left:1339.37px;top:978px;font-size:11.0px;line-height:14.88px;color:#c9c9c9;transform:scaleX(0.9818);">85</span>
<span class="t" style="left:1415.44px;top:978px;font-size:11.0px;line-height:14.88px;color:#c9c9c9;transform:scaleX(0.9818);">90</span>
<div style="left:45.9px;top:1003.4px;width:74px;height:17.2px;background:#191919;border-radius:4px;"></div>
<span class="t" style="left:74.70px;top:1005px;font-size:11.0px;line-height:14.88px;color:#e4e4e4;transform:scaleX(0.9818);">0 F</span>
<div style="left:127.8px;top:1003.4px;width:1219px;height:16.4px;background:#3d3d3d;border-radius:3px;"></div>
<div style="left:132.5px;top:1006.5px;width:1px;height:10px;background:#555;"></div>
<div style="left:1337.5px;top:1006.5px;width:1px;height:10px;background:#555;"></div>
<div style="left:134.5px;top:1006.5px;width:1px;height:10px;background:#555;"></div>
<div style="left:1339.5px;top:1006.5px;width:1px;height:10px;background:#555;"></div>
<div style="left:136.5px;top:1006.5px;width:1px;height:10px;background:#555;"></div>
<div style="left:1341.5px;top:1006.5px;width:1px;height:10px;background:#555;"></div>
<span class="t" style="left:142.90px;top:1004px;font-size:11.0px;line-height:14.88px;color:#e4e4e4;transform:scaleX(0.9818);">0 F</span>
<span class="t" style="left:1307.39px;top:1004px;font-size:11.0px;line-height:14.88px;color:#e4e4e4;transform:scaleX(0.9818);">90 F</span>
<div style="left:1354.2px;top:1003.4px;width:73.5px;height:17.2px;background:#191919;border-radius:4px;"></div>
<span class="t" style="left:1379.70px;top:1005px;font-size:11.0px;line-height:14.88px;color:#e4e4e4;transform:scaleX(0.9818);">90 F</span>
<div style="left:0px;top:1022.5px;width:1915px;height:26px;background:#1e1e1e;"></div>
<svg style="left:5px;top:1030.5px;" width="14" height="10.6" viewBox="0 0 14 10.6"><rect x="0" y="0.0" width="14" height="1.6" rx="0.5" fill="#a8a8a8"/><rect x="0" y="4.5" width="14" height="1.6" rx="0.5" fill="#a8a8a8"/><rect x="0" y="9.0" width="14" height="1.6" rx="0.5" fill="#a8a8a8"/></svg>
<svg style="left:28px;top:1027.5px;" width="17" height="17" viewBox="0 0 17 17"><path d="M14 5 A6.7 6.7 0 1 0 15 9" fill="none" stroke="#a8a8a8" stroke-width="1.3" stroke-linecap="round" stroke-linejoin="round"/><path d="M5.5 8 L8.3 11 L14.5 3.2" fill="none" stroke="#a8a8a8" stroke-width="1.4" stroke-linecap="round" stroke-linejoin="round"/></svg>
</body></html>
